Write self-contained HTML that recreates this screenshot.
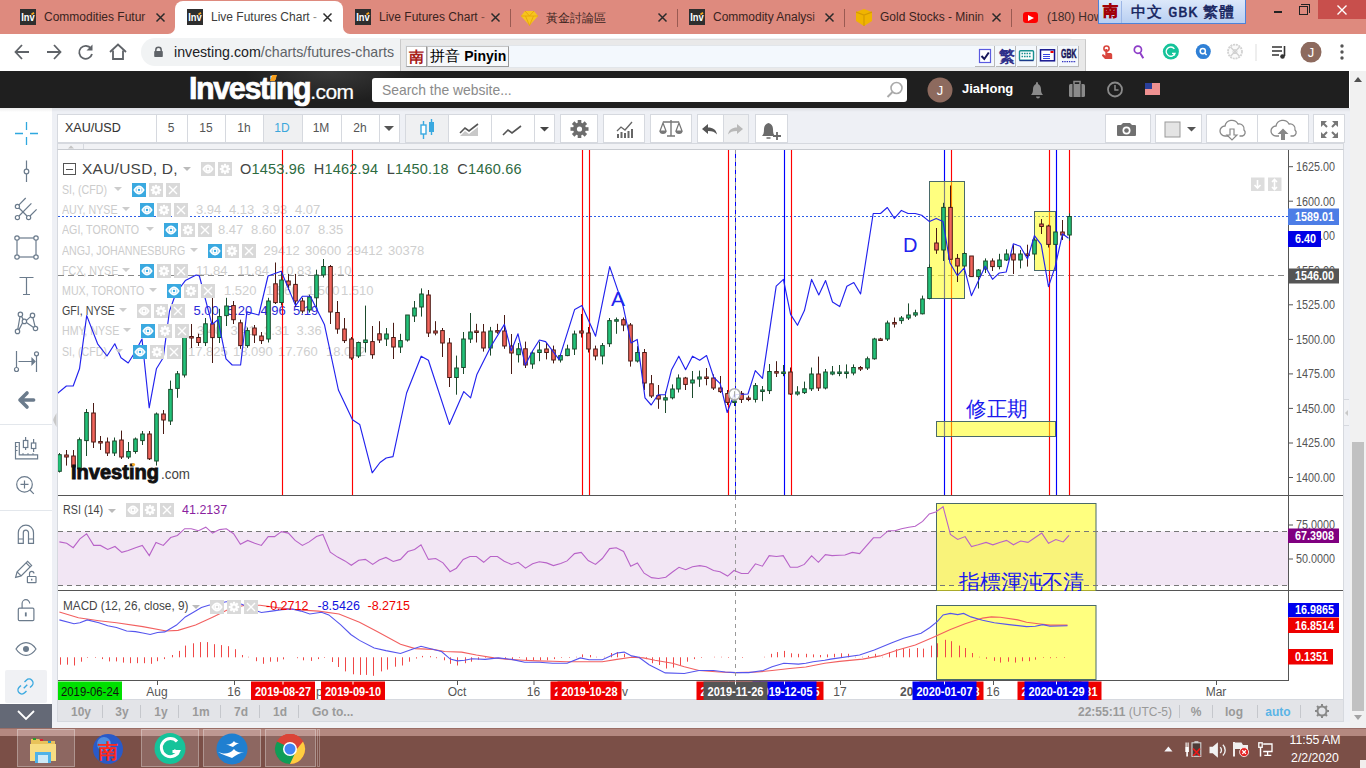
<!DOCTYPE html><html><head><meta charset="utf-8"><style>
*{margin:0;padding:0;box-sizing:border-box}
html,body{width:1366px;height:768px;overflow:hidden;background:#fff;font-family:"Liberation Sans",sans-serif;position:relative}
.a{position:absolute}
.tab{position:absolute;top:0;height:34px;font-size:12px;color:#3c2a28;white-space:nowrap}
.tabt{position:absolute;top:10px;left:36px;width:112px;overflow:hidden;}
.fade{position:absolute;top:0;right:0;width:14px;height:18px}
.x{position:absolute;top:9px;font-size:15px;color:#333}
.inv{position:absolute;top:10px;width:16px;height:16px;background:#2b2b2b;color:#fff;font-size:9px;font-weight:bold;line-height:16px;text-align:center;letter-spacing:-0.5px}
.sep{position:absolute;top:9px;width:1px;height:18px;background:#9a5a52}
.tb{position:absolute;top:114px;height:29px;background:#fff;border:1px solid #d8dbe2}
.lt{position:absolute;left:0;width:52px;text-align:center}
</style></head><body>
<div class="a" style="left:0;top:0;width:1366px;height:34px;background:#de8a7e"></div>
<div class="a" style="left:175px;top:1px;width:168px;height:40px;background:#fff;border-radius:8px 8px 0 0"></div>
<div class="a" style="left:165px;top:25px;width:188px;height:9px;background:#fff"></div><div class="a" style="left:150px;top:20px;width:25px;height:14px;background:#de8a7e;border-bottom-right-radius:7px"></div><div class="a" style="left:343px;top:20px;width:25px;height:14px;background:#de8a7e;border-bottom-left-radius:7px"></div>
<svg class="a" style="left:20px;top:9px" width="16" height="16"><rect width="16" height="16" fill="#2e2e2e"/><text x="1.2" y="12.3" font-size="10.5" font-weight="bold" fill="#fff" textLength="13.5" lengthAdjust="spacingAndGlyphs" font-family="Liberation Sans">Inv</text><path d="M11.5 5.5l2.5-1.8" stroke="#f7a51e" stroke-width="1.8"/></svg>
<div class="tab" style="left:8px;width:168px"><div class="tabt" style="color:#3a2320">Commodities Futur</div><div class="fade" style="left:134px;top:10px;background:linear-gradient(90deg,rgba(0,0,0,0),#de8a7e)"></div></div>
<svg class="a" style="left:155px;top:12px" width="11" height="11"><path d="M1.5 1.5L9.5 9.5M9.5 1.5L1.5 9.5" stroke="#2a2a2a" stroke-width="1.5"/></svg>
<svg class="a" style="left:187px;top:9px" width="16" height="16"><rect width="16" height="16" fill="#2e2e2e"/><text x="1.2" y="12.3" font-size="10.5" font-weight="bold" fill="#fff" textLength="13.5" lengthAdjust="spacingAndGlyphs" font-family="Liberation Sans">Inv</text><path d="M11.5 5.5l2.5-1.8" stroke="#f7a51e" stroke-width="1.8"/></svg>
<div class="tab" style="left:175px;width:168px"><div class="tabt" style="color:#3c3c3c">Live Futures Chart -</div><div class="fade" style="left:134px;top:10px;background:linear-gradient(90deg,rgba(0,0,0,0),#fff)"></div></div>
<svg class="a" style="left:322px;top:12px" width="11" height="11"><path d="M1.5 1.5L9.5 9.5M9.5 1.5L1.5 9.5" stroke="#2a2a2a" stroke-width="1.5"/></svg>
<svg class="a" style="left:355px;top:9px" width="16" height="16"><rect width="16" height="16" fill="#2e2e2e"/><text x="1.2" y="12.3" font-size="10.5" font-weight="bold" fill="#fff" textLength="13.5" lengthAdjust="spacingAndGlyphs" font-family="Liberation Sans">Inv</text><path d="M11.5 5.5l2.5-1.8" stroke="#f7a51e" stroke-width="1.8"/></svg>
<div class="tab" style="left:343px;width:168px"><div class="tabt" style="color:#3a2320">Live Futures Chart -</div><div class="fade" style="left:134px;top:10px;background:linear-gradient(90deg,rgba(0,0,0,0),#de8a7e)"></div></div>
<svg class="a" style="left:490px;top:12px" width="11" height="11"><path d="M1.5 1.5L9.5 9.5M9.5 1.5L1.5 9.5" stroke="#2a2a2a" stroke-width="1.5"/></svg>
<svg class="a" style="left:521px;top:10px" width="17" height="16" viewBox="0 0 17 16"><path d="M4 1h9l4 5-8.5 9.5L0 6z" fill="#f7c51e"/><path d="M0 6h17M4 1l4.5 5 4.5-5M4.5 6l4 9.5 4-9.5" stroke="#e8a80c" stroke-width="1" fill="none"/></svg>
<div class="tab" style="left:510px;width:168px"><div class="tabt" style="color:#3a2320">黃金討論區</div><div class="fade" style="left:134px;top:10px;background:linear-gradient(90deg,rgba(0,0,0,0),#de8a7e)"></div></div>
<svg class="a" style="left:657px;top:12px" width="11" height="11"><path d="M1.5 1.5L9.5 9.5M9.5 1.5L1.5 9.5" stroke="#2a2a2a" stroke-width="1.5"/></svg>
<div class="sep" style="left:677px"></div>
<svg class="a" style="left:689px;top:9px" width="16" height="16"><rect width="16" height="16" fill="#2e2e2e"/><text x="1.2" y="12.3" font-size="10.5" font-weight="bold" fill="#fff" textLength="13.5" lengthAdjust="spacingAndGlyphs" font-family="Liberation Sans">Inv</text><path d="M11.5 5.5l2.5-1.8" stroke="#f7a51e" stroke-width="1.8"/></svg>
<div class="tab" style="left:677px;width:168px"><div class="tabt" style="color:#3a2320">Commodity Analysi</div><div class="fade" style="left:134px;top:10px;background:linear-gradient(90deg,rgba(0,0,0,0),#de8a7e)"></div></div>
<svg class="a" style="left:824px;top:12px" width="11" height="11"><path d="M1.5 1.5L9.5 9.5M9.5 1.5L1.5 9.5" stroke="#2a2a2a" stroke-width="1.5"/></svg>
<div class="sep" style="left:844px"></div>
<svg class="a" style="left:856px;top:9px" width="16" height="17" viewBox="0 0 16 17"><path d="M0 3l8-3 8 3v9l-8 5-8-5z" fill="#f0b400"/><path d="M0 3l8 3 8-3M8 6v11" stroke="#d59a00" stroke-width="1.2" fill="none"/></svg>
<div class="tab" style="left:844px;width:168px"><div class="tabt" style="color:#3a2320">Gold Stocks - Minin</div><div class="fade" style="left:134px;top:10px;background:linear-gradient(90deg,rgba(0,0,0,0),#de8a7e)"></div></div>
<svg class="a" style="left:991px;top:12px" width="11" height="11"><path d="M1.5 1.5L9.5 9.5M9.5 1.5L1.5 9.5" stroke="#2a2a2a" stroke-width="1.5"/></svg>
<div class="sep" style="left:1011px"></div>
<div class="a" style="left:1023px;top:12px;width:15px;height:11px;background:#f00;border-radius:3px"></div><svg class="a" style="left:1028px;top:14.5px" width="6" height="6"><path d="M0 0L6 3 0 6z" fill="#fff"/></svg>
<div class="tab" style="left:1011px;width:120px"><div class="tabt">(180) How</div></div>
<div class="sep" style="left:510px"></div>
<div class="a" style="left:1098px;top:0;width:148px;height:24px;background:linear-gradient(#dce8fa,#b9cff2);border:1px solid #4d82d8;border-top:none"></div>
<div class="a" style="left:1103px;top:2px;font-size:15px;font-weight:bold;color:#c8000a;-webkit-text-stroke:0.6px #a00008">南</div>
<div class="a" style="left:1121px;top:1px;width:1px;height:22px;background:#9cb6e6"></div>
<div class="a" style="left:1131px;top:3px;font-size:15px;color:#15235e;letter-spacing:1px;white-space:nowrap;-webkit-text-stroke:0.5px #15235e">中文 <span style="font-family:'Liberation Mono',monospace">GBK</span> 繁體</div>
<div class="a" style="left:1274px;top:11px;width:8px;height:1.5px;background:#222"></div>
<div class="a" style="left:1299px;top:6px;width:9px;height:9px;border:1.3px solid #222"></div><div class="a" style="left:1301px;top:4px;width:9px;height:9px;border-top:1.3px solid #222;border-right:1.3px solid #222"></div>
<div class="a" style="left:1318px;top:0;width:48px;height:19px;background:#c84f4c"></div>
<svg class="a" style="left:1337px;top:5px" width="10" height="10"><path d="M0.5 0.5L9.5 9.5M9.5 0.5L0.5 9.5" stroke="#fff" stroke-width="1.4"/></svg>
<div class="a" style="left:0;top:34px;width:1366px;height:37px;background:#fff"></div>
<svg class="a" style="left:14px;top:43px" width="120" height="18" viewBox="0 0 120 18" fill="none" stroke="#5f6368" stroke-width="1.8"><path d="M15 9H2M8 2L1.5 9 8 16"/><path d="M33 9H46M40 2L46.5 9 40 16"/><path d="M77 5.5A6.5 6.5 0 1 0 78 11" /><path d="M78.5 1.5v6h-6z" fill="#5f6368" stroke="none"/><path d="M96 9L104 1.5 112 9"/><path d="M99 7.5v8.5h10V7.5"/></svg>
<div class="a" style="left:141px;top:38px;width:940px;height:28px;background:#f1f3f4;border-radius:14px"></div>
<svg class="a" style="left:153px;top:46px" width="11" height="12"><path d="M2.8 5V4a2.7 2.7 0 0 1 5.4 0V5" stroke="#5f6368" stroke-width="1.5" fill="none"/><rect x="1.2" y="5" width="8.6" height="6" rx="0.8" fill="#5f6368"/></svg>
<div class="a" style="left:174px;top:44px;font-size:14.2px;color:#202124;white-space:nowrap">investing.com<span style="color:#5f6368">/charts/futures-charts</span></div>
<div class="a" style="left:400px;top:39px;width:686px;height:36px;background:#e9e9e9;border:1px solid #c9c9c9;border-top-color:#ddd"></div>
<div class="a" style="left:405px;top:45px;width:674px;height:23px;background:#f3f8fd;border:1px solid #e2e6ea"></div>
<div class="a" style="left:406px;top:46px;width:21px;height:21px;background:#fff;border:1px solid #c5c5c5;border-right-color:#999;border-bottom-color:#999"></div>
<div class="a" style="left:409px;top:48px;font-size:15px;font-weight:bold;color:#a8201a">南</div>
<div class="a" style="left:427px;top:46px;width:82px;height:21px;background:#f6f8fa;border:1px solid #c5c5c5;border-right-color:#999;border-bottom-color:#999"></div>
<div class="a" style="left:430px;top:47px;font-size:15px;color:#000;white-space:nowrap">拼音 <b style="font-size:14px">Pinyin</b></div>
<div class="a" style="left:975px;top:46px;width:20px;height:21px;background:#f4f8fc;border-right:1px solid #b9b9b9;border-bottom:1px solid #b9b9b9"></div>
<div class="a" style="left:996px;top:46px;width:20px;height:21px;background:#f4f8fc;border-right:1px solid #b9b9b9;border-bottom:1px solid #b9b9b9"></div>
<div class="a" style="left:1017px;top:46px;width:20px;height:21px;background:#f4f8fc;border-right:1px solid #b9b9b9;border-bottom:1px solid #b9b9b9"></div>
<div class="a" style="left:1038px;top:46px;width:20px;height:21px;background:#f4f8fc;border-right:1px solid #b9b9b9;border-bottom:1px solid #b9b9b9"></div>
<div class="a" style="left:1059px;top:46px;width:20px;height:21px;background:#f4f8fc;border-right:1px solid #b9b9b9;border-bottom:1px solid #b9b9b9"></div>
<svg class="a" style="left:975px;top:46px" width="105" height="20" viewBox="0 0 105 20"><rect x="4.5" y="3.5" width="11" height="13" fill="#fff" stroke="#5a5ae0" stroke-width="1.2"/><path d="M6.5 10l2.8 3 4.5-6.5" stroke="#15155a" stroke-width="2" fill="none"/><text x="23.5" y="15.5" font-size="15.5" font-weight="bold" fill="#30308a">繁</text><rect x="44.5" y="4.7" width="14" height="9.5" rx="1" fill="#fff" stroke="#1a9090" stroke-width="1.4"/><path d="M46.5 7.5h10M46.5 10.5h10" stroke="#1a9090" stroke-width="1.6" stroke-dasharray="1.6 0.9"/><path d="M44.5 14.6h14" stroke="#1a3a8a" stroke-width="1.2"/><rect x="65.5" y="3.8" width="14" height="11" fill="#fff" stroke="#151590" stroke-width="1.5"/><path d="M68 8.5h7M68 10.5h7M68 12.5h7" stroke="#2030e0" stroke-width="0.9"/><rect x="75.5" y="5" width="3" height="2" fill="#e00"/><text x="86" y="11.8" font-size="12" font-weight="bold" fill="#15155a" stroke="#15155a" stroke-width="0.5" textLength="15.5" lengthAdjust="spacingAndGlyphs">GBK</text><path d="M87 15.7h14" stroke="#3030c0" stroke-width="1.3" stroke-dasharray="1.4 0.9"/></svg>
<svg class="a" style="left:1096px;top:42px" width="270" height="22" viewBox="0 0 270 22"><circle cx="10.5" cy="6.6" r="2.6" fill="none" stroke="#d9463e" stroke-width="1.6"/><path d="M9.3 7v6.8l-1.6-1.2c-1-.7-2.2.3-1.5 1.3L9 17h7.2v-4.3c0-1.3-1-1.8-2.2-1.8h-2.6V7z" fill="#d9463e"/><circle cx="41.9" cy="7.7" r="3.6" stroke="#8e3ec8" stroke-width="1.7" fill="none"/><path d="M44 10.8L47.3 16.2" stroke="#8e3ec8" stroke-width="2"/><circle cx="74.9" cy="9.6" r="8" fill="#15c39a"/><path d="M78.4 6.8a4.6 4.6 0 1 0 .6 4.6h-3" stroke="#fff" stroke-width="1.3" fill="none"/><path d="M77 11.4l2 2" stroke="#fff" stroke-width="1.3"/><circle cx="107.3" cy="9.6" r="7.5" fill="#2f80d6"/><circle cx="106.8" cy="9.1" r="2.6" stroke="#fff" stroke-width="1.5" fill="none"/><path d="M108.6 11l2 2" stroke="#fff" stroke-width="1.5"/><circle cx="139" cy="9.6" r="7" stroke="#d2d2d2" stroke-width="1.8" stroke-dasharray="2 0.8" fill="#fafafa"/><circle cx="139" cy="9.6" r="2" fill="none" stroke="#d0d0d0" stroke-width="1"/><path d="M134.5 5l9 9.2M143.5 5l-9 9.2" stroke="#d0d0d0" stroke-width="1.3"/><path d="M160 2v17" stroke="#ddd" stroke-width="1"/><path d="M176 5h10M176 9h10M176 13h7" stroke="#333" stroke-width="1.6"/><path d="M188.5 4v10" stroke="#333" stroke-width="1.6"/><circle cx="186.5" cy="14.5" r="2.3" fill="#333"/><circle cx="215" cy="10" r="10.5" fill="#8d6a5e"/><text x="215" y="15" font-size="13" fill="#fff" text-anchor="middle" font-family="Liberation Sans">J</text><circle cx="246" cy="4" r="1.7" fill="#555"/><circle cx="246" cy="10" r="1.7" fill="#555"/><circle cx="246" cy="16" r="1.7" fill="#555"/></svg>
<div class="a" style="left:0;top:71px;width:1349px;height:38px;background:#1f1f1f"></div>
<div class="a" style="left:230px;top:71px;width:200px;height:37px;background:radial-gradient(ellipse at 50% 0%,rgba(90,90,90,.45),rgba(0,0,0,0) 60%)"></div>
<div class="a" style="left:189px;top:71px;font-size:30.5px;font-weight:bold;color:#fff;letter-spacing:-1.4px;white-space:nowrap;-webkit-text-stroke:0.7px #fff">Investing<span style="font-weight:normal;font-size:21px;letter-spacing:-0.6px;-webkit-text-stroke:0.2px #fff">.com</span></div>
<div class="a" style="left:271px;top:75px;width:5px;height:6px;background:#f7a01f;transform:skewX(-20deg)"></div>
<div class="a" style="left:372px;top:78px;width:535px;height:24px;background:#fff;border-radius:3px"></div>
<div class="a" style="left:382px;top:82px;font-size:13.9px;color:#8a8a8a;white-space:nowrap">Search the website...</div>
<svg class="a" style="left:886px;top:81px" width="18" height="18"><circle cx="10.5" cy="7" r="5.5" stroke="#aaa" stroke-width="1.6" fill="none"/><path d="M6.5 11L1.5 16" stroke="#aaa" stroke-width="2"/></svg>
<svg class="a" style="left:926px;top:76px" width="240" height="28" viewBox="0 0 240 28"><circle cx="14" cy="14" r="12.5" fill="#8d6a5e"/><text x="14" y="19" font-size="13" fill="#fff" text-anchor="middle" font-family="Liberation Sans">J</text><path d="M107 19h10c-1.5-1.5-2-3-2-6 0-2.5-1.5-4.5-3-5v-1c0-1-1-1-1-1s-1 0-1 1v1c-1.5.5-3 2.5-3 5 0 3-.5 4.5-2 6z M110 20.5a2 2 0 0 0 4 0z" fill="#8a8a8a"/><rect x="143" y="8" width="16" height="13" rx="1.5" fill="#8a8a8a"/><path d="M148 8V5.5h6V8" stroke="#8a8a8a" stroke-width="1.5" fill="none"/><path d="M147 8v13M155 8v13" stroke="#1f1f1f" stroke-width="1"/><circle cx="189" cy="13.5" r="7" stroke="#8a8a8a" stroke-width="1.8" fill="none"/><path d="M189 9v5h3.5" stroke="#8a8a8a" stroke-width="1.5" fill="none"/></svg>
<div class="a" style="left:962px;top:81px;font-size:13px;font-weight:bold;color:#fff">JiaHong</div>
<svg class="a" style="left:1145px;top:83px" width="15" height="12" viewBox="0 0 15 12"><rect width="15" height="12" fill="#fff"/><path d="M0 1h15M0 3h15M0 5h15M0 7h15M0 9h15M0 11h15" stroke="#d22" stroke-width="1"/><rect width="7" height="6" fill="#2a3f9a"/></svg>
<div class="a" style="left:1350px;top:71px;width:16px;height:657px;background:#f1f1f1"></div>
<svg class="a" style="left:1353px;top:76px" width="10" height="8"><path d="M1 6L5 1 9 6z" fill="#505050"/></svg>
<svg class="a" style="left:1353px;top:714px" width="10" height="8"><path d="M1 1L5 6 9 1z" fill="#a3a3a3"/></svg>
<div class="a" style="left:1352px;top:442px;width:12px;height:269px;background:#c1c1c1"></div>
<div class="a" style="left:0;top:108px;width:1350px;height:620px;background:#eef0f5"></div>
<div class="a" style="left:0;top:108px;width:52px;height:620px;background:#fff"></div><div class="a" style="left:0;top:108px;width:1350px;height:4px;background:linear-gradient(rgba(0,0,0,0.08),rgba(0,0,0,0))"></div>
<svg class="a" style="left:52px;top:410px" width="6" height="20"><path d="M4.5 3Q1 9 1.2 10 1 11 4.5 17z" fill="#c8c8c8"/></svg>
<div class="a" style="left:1344px;top:399px;width:5px;height:27px;border-top:1px solid #d6d9df;border-bottom:1px solid #d6d9df;background:#f1f2f5"></div><svg class="a" style="left:1344px;top:409px" width="5" height="8"><path d="M4 1L1 4 4 7z" fill="#c8c8c8"/></svg>
<div class="a" style="left:57px;top:114px;width:343px;height:29px;background:#fff;border:1px solid #d6d9df"></div>
<div class="a" style="left:156px;top:114px;width:1px;height:29px;background:#d6d9df"></div>
<div class="a" style="left:187px;top:114px;width:1px;height:29px;background:#d6d9df"></div>
<div class="a" style="left:225px;top:114px;width:1px;height:29px;background:#d6d9df"></div>
<div class="a" style="left:263px;top:114px;width:1px;height:29px;background:#d6d9df"></div>
<div class="a" style="left:264px;top:115px;width:38px;height:27px;background:#eff0f2"></div>
<div class="a" style="left:302px;top:114px;width:1px;height:29px;background:#d6d9df"></div>
<div class="a" style="left:341px;top:114px;width:1px;height:29px;background:#d6d9df"></div>
<div class="a" style="left:379px;top:114px;width:1px;height:29px;background:#d6d9df"></div>
<div class="a" style="left:65px;top:120px;font-size:13.5px;color:#333;transform:scaleX(0.93);transform-origin:0 0;-webkit-text-stroke:0.1px #444">XAU/USD</div>
<div class="a" style="left:156px;width:30px;top:121px;font-size:12px;color:#555;text-align:center">5</div>
<div class="a" style="left:191px;width:30px;top:121px;font-size:12px;color:#555;text-align:center">15</div>
<div class="a" style="left:229px;width:30px;top:121px;font-size:12px;color:#555;text-align:center">1h</div>
<div class="a" style="left:267px;width:30px;top:121px;font-size:12px;color:#3ba7dc;text-align:center">1D</div>
<div class="a" style="left:306px;width:30px;top:121px;font-size:12px;color:#555;text-align:center">1M</div>
<div class="a" style="left:345px;width:30px;top:121px;font-size:12px;color:#555;text-align:center">2h</div>
<svg class="a" style="left:384px;top:126px" width="10" height="6"><path d="M0 0h10L5 5z" fill="#555"/></svg>
<div class="a" style="left:405px;top:114px;width:150px;height:29px;background:#fff;border:1px solid #d6d9df"></div>
<div class="a" style="left:406px;top:115px;width:42px;height:27px;background:#eff0f2"></div>
<div class="a" style="left:448px;top:114px;width:1px;height:29px;background:#d6d9df"></div>
<div class="a" style="left:491px;top:114px;width:1px;height:29px;background:#d6d9df"></div>
<div class="a" style="left:534px;top:114px;width:1px;height:29px;background:#d6d9df"></div>
<div class="a" style="left:560px;top:114px;width:38px;height:29px;background:#fff;border:1px solid #d6d9df"></div>
<div class="a" style="left:603px;top:114px;width:42px;height:29px;background:#fff;border:1px solid #d6d9df"></div>
<div class="a" style="left:650px;top:114px;width:42px;height:29px;background:#fff;border:1px solid #d6d9df"></div>
<div class="a" style="left:697px;top:114px;width:52px;height:29px;background:#fff;border:1px solid #d6d9df"></div>
<div class="a" style="left:723px;top:115px;width:25px;height:27px;background:#eff0f2;border-left:1px solid #d6d9df"></div>
<div class="a" style="left:755px;top:114px;width:33px;height:29px;background:#fff;border:1px solid #d6d9df"></div>
<svg class="a" style="left:405px;top:114px" width="390" height="30" viewBox="0 0 390 30"><path d="M18.5 7v18M26.5 5v16" stroke="#3aa9e0" stroke-width="1.4"/><rect x="16" y="11" width="5" height="9" fill="#fff" stroke="#3aa9e0" stroke-width="1.4"/><rect x="24" y="8" width="5" height="10" fill="#3aa9e0"/><g transform="translate(-6,0)"><path d="M61 22l5-5 4 3 9-7v9z" fill="#c8c8c8"/><path d="M61 19l5-5 4 3 9-7" stroke="#555" stroke-width="1.6" fill="none"/></g><path d="M98 21l5-5 4 3 9-7" stroke="#555" stroke-width="1.6" fill="none"/><path d="M135 13h9l-4.5 4.5z" fill="#444"/><g transform="translate(174.5,15)"><circle r="6.5" fill="#6d6d6d"/><g fill="#6d6d6d"><rect x="-1.8" y="-9" width="3.6" height="4" transform="rotate(0)"/><rect x="-1.8" y="-9" width="3.6" height="4" transform="rotate(45)"/><rect x="-1.8" y="-9" width="3.6" height="4" transform="rotate(90)"/><rect x="-1.8" y="-9" width="3.6" height="4" transform="rotate(135)"/><rect x="-1.8" y="-9" width="3.6" height="4" transform="rotate(180)"/><rect x="-1.8" y="-9" width="3.6" height="4" transform="rotate(225)"/><rect x="-1.8" y="-9" width="3.6" height="4" transform="rotate(270)"/><rect x="-1.8" y="-9" width="3.6" height="4" transform="rotate(315)"/></g><circle r="2.6" fill="#fff"/></g><g transform="translate(-2,0)"><path d="M215 24v-4M218.5 24v-6M222 24v-5M225.5 24v-7M229 24v-9" stroke="#666" stroke-width="2"/><path d="M214 17l4-4 4 3 7-8" stroke="#666" stroke-width="1.3" fill="none"/></g><g transform="translate(-8,0)"><path d="M266 8h16M274 6v16M270 22h8" stroke="#777" stroke-width="1.4"/><path d="M266 9l-3 8h6zM282 9l-3 8h6z" stroke="#777" stroke-width="1.2" fill="none"/><path d="M262.5 17a3.5 3 0 0 0 7 0M278.5 17a3.5 3 0 0 0 7 0" fill="#777"/></g><path d="M297 15l6-5v3.5c5 0 8 2 9 7-2-2.5-4.5-3.5-9-3.5V20z" fill="#555"/><path d="M338 15l-6-5v3.5c-5 0-8 2-9 7 2-2.5 4.5-3.5 9-3.5V20z" fill="#b8b8b8"/><g transform="translate(-2,0)"><path d="M359 22h13c-1.5-1.5-2-3-2-7 0-3.5-2-5.5-4.5-6v-1.5h-0v0h0v1.5c-2.5.5-4.5 2.5-4.5 6 0 4-.5 5.5-2 7z" fill="#6a6a6a"/><path d="M363.5 24h4" stroke="#6a6a6a" stroke-width="1.5"/><path d="M374 18v8M370 22h8" stroke="#6a6a6a" stroke-width="1.8"/></g></svg>
<div class="a" style="left:1105px;top:114px;width:46px;height:29px;background:#fff;border:1px solid #d6d9df"></div>
<div class="a" style="left:1155px;top:114px;width:47px;height:29px;background:#fff;border:1px solid #d6d9df"></div>
<div class="a" style="left:1206px;top:114px;width:103px;height:29px;background:#fff;border:1px solid #d6d9df"></div>
<div class="a" style="left:1313px;top:114px;width:32px;height:29px;background:#fff;border:1px solid #d6d9df"></div>
<div class="a" style="left:1257px;top:115px;width:1px;height:27px;background:#d6d9df"></div>
<svg class="a" style="left:1105px;top:114px" width="240" height="30" viewBox="0 0 240 30"><path d="M13 11h3l2-2h7l2 2h3a1 1 0 0 1 1 1v9a1 1 0 0 1-1 1H13a1 1 0 0 1-1-1v-9a1 1 0 0 1 1-1z" fill="#707070"/><circle cx="21.5" cy="16.5" r="4" fill="#fff"/><circle cx="21.5" cy="16.5" r="2.3" fill="#707070"/><rect x="60" y="8" width="15" height="15" fill="#e4e4e4" stroke="#999" stroke-width="1"/><path d="M82 13h9l-4.5 4.5z" fill="#555"/><g transform="translate(11,0)"><path d="M112 22h-3a5 5 0 0 1 0-10 7 7 0 0 1 13-2 5 5 0 0 1 6 6 3.5 3.5 0 0 1-1.5 6h-3" stroke="#888" stroke-width="1.3" fill="none"/><path d="M114 15v6h-3l5 5 5-5h-3v-6z" stroke="#888" stroke-width="1.2" fill="#fff"/></g><g transform="translate(11,0)"><path d="M163 22h-3a5 5 0 0 1 0-10 7 7 0 0 1 13-2 5 5 0 0 1 6 6 3.5 3.5 0 0 1-1.5 6h-3" stroke="#888" stroke-width="1.3" fill="none"/><path d="M165 26v-6h-3.5l5.5-5.5 5.5 5.5h-3.5v6z" fill="#888"/></g><path d="M216 7h6l-6 6zM233 7h-6l6 6zM216 24h6l-6-6zM233 24h-6l6-6z" fill="#777"/><path d="M217 8l5 5M232 8l-5 5M217 23l5-5M232 23l-5-5" stroke="#777" stroke-width="2"/></svg>
<svg class="a" style="left:0;top:108px" width="52" height="620" viewBox="0 108 52 620" fill="none" stroke="#6b7b8c" stroke-width="1.2"><path d="M26.5 122v8M26.5 137v8M15 133.5h8M30 133.5h8" stroke="#2fa8df" stroke-width="1.3"/><path d="M26.5 160.5v8.5M26.5 174v8"/><circle cx="26.5" cy="171.5" r="2.3"/><path d="M19 204.8L25.7 198M30 216L36.6 209.3M19 216L31.4 203.3M19 208L27 216"/><circle cx="17.4" cy="206.4" r="2.1"/><circle cx="17.4" cy="217.6" r="2.1"/><circle cx="28.6" cy="217.6" r="2.1"/><rect x="17" y="238" width="19" height="19"/><circle cx="17" cy="238" r="2.2" fill="#fff"/><circle cx="36" cy="238" r="2.2" fill="#fff"/><circle cx="17" cy="257" r="2.2" fill="#fff"/><circle cx="36" cy="257" r="2.2" fill="#fff"/><path d="M19.5 277.5h14M26.5 277.5v17M23 294.5h7"/><path d="M20 316.5L17.8 329.2M21.5 316.4L23.2 319.4M22.6 322.8L19 329.6M26.5 320.4L30.6 316.6M26.4 322.4L33.6 327.4M32.9 317.6L35 326.3"/><circle cx="20.4" cy="314.4" r="2.2"/><circle cx="32.5" cy="315.4" r="2.2"/><circle cx="24.4" cy="321.4" r="2.2"/><circle cx="17.5" cy="331.4" r="2.2"/><circle cx="35.5" cy="328.5" r="2.2"/><path d="M16.5 351v16.5M36.5 356v16M18.5 361.5h15"/><path d="M32 358.5l3 3-3 3z" fill="#6b7b8c"/><circle cx="16.5" cy="369.5" r="2"/><circle cx="36.5" cy="353.8" r="2"/><path d="M33.6 400H20M27 393l-7 7 7 7" stroke-width="3.6" stroke-linecap="round" stroke-linejoin="round"/><path d="M0 424.5h52" stroke="#e3e7ec" stroke-width="1"/><path d="M15.5 442.5h3.8v12.3h18.3v4h-22.1z"/><path d="M15.5 446.5h2M15.5 450.5h2M23 454.8v-1.5M28 454.8v-1.5M33 454.8v-1.5"/><path d="M25.6 437v3.5M25.6 447.5v2.5M33.6 439v4M33.6 448.5v3.5"/><rect x="23.4" y="440.5" width="4.4" height="7"/><rect x="31.4" y="443" width="4.4" height="5.5"/><circle cx="24.5" cy="484.4" r="7.8"/><path d="M30 490l3.8 3.8M24.5 480.5v8M20.5 484.4h8" /><path d="M0 510.5h52" stroke="#e3e7ec" stroke-width="1"/><path d="M18.3 543.4V532.8a7.6 7.6 0 0 1 15.2 0V543.4H28.5V532.8a2.6 2.6 0 0 0-5.2 0V543.4z M18.3 539h5M28.5 539h5"/><path d="M15.6 577.4l1.5-5.5 10.5-10.5 4 4-10.5 10.5zM17.1 571.9l4 4M26.1 562.9l4 4"/><rect x="27.4" y="576.5" width="8.6" height="6.2" rx="0.5"/><path d="M29.5 576.5v-3a2.2 2.2 0 0 1 4.4 0"/><path d="M31.7 578.7v1.8" stroke-width="1.4"/><rect x="18.3" y="608.2" width="15.6" height="12.5" rx="1.2"/><path d="M22.1 608.2V603.5a3.8 3.8 0 0 1 7.6 0"/><path d="M25.8 612.4v4" stroke-width="1.8"/><path d="M16 649c5.5-8.5 14.5-8.5 20 0-5.5 8.5-14.5 8.5-20 0z"/><circle cx="26" cy="649" r="3" fill="#6b7b8c" stroke="none"/></svg>
<div class="a" style="left:5px;top:670px;width:41.5px;height:32.5px;background:#f0f1f4;border-radius:2px"></div>
<svg class="a" style="left:0;top:665px" width="52" height="40"><g transform="rotate(-45 25.5 21.5) translate(0,0)"><path d="M23 17.6h-2.6a3.9 3.9 0 0 0 0 7.8h2.6M28 25.4h2.6a3.9 3.9 0 0 0 0-7.8h-2.6" stroke="#3aa9e0" stroke-width="1.4" fill="none"/><path d="M23 21.5h5" stroke="#3aa9e0" stroke-width="1.4"/></g></svg>
<div class="a" style="left:0;top:704px;width:52px;height:24px;background:#646976"></div>
<svg class="a" style="left:16px;top:709px" width="20" height="12"><path d="M2 2l8 8 8-8" stroke="#fff" stroke-width="1.8" fill="none"/></svg>
<div class="a" style="left:57px;top:143px;width:1287px;height:7px;background:#f1f2f5;border:1px solid #d6d9df;border-bottom:none"></div>
<div class="a" style="left:83px;top:143px;width:1px;height:7px;background:#d6d9df"></div>
<svg class="a" style="left:67.5px;top:145px" width="6" height="4"><path d="M0 3.5L3 0.5 6 3.5z" fill="#c4c4c4"/></svg>
<div class="a" style="left:57px;top:149px;width:1287px;height:551px;background:#fff;border:1px solid #d6d9df;border-top-color:#c8cbd0"></div>
<div class="a" style="left:57px;top:700px;width:1287px;height:22px;background:#e3e4e8;border:1px solid #d6d9df;border-top:none"></div>
<div class="a" style="left:52px;top:722px;width:1298px;height:6px;background:#f1f2f5"></div>
<div class="a" style="left:62px;top:182px;font-size:13px;color:#ccc;white-space:nowrap;transform:scaleX(0.82);transform-origin:0 0">SI, (CFD)</div>
<div class="a" style="left:62px;top:202px;font-size:13px;color:#ccc;white-space:nowrap;transform:scaleX(0.82);transform-origin:0 0">AUY, NYSE</div>
<div class="a" style="left:196px;top:202px;font-size:13px;color:#cfcfcf;white-space:nowrap">3.94</div>
<div class="a" style="left:229px;top:202px;font-size:13px;color:#cfcfcf;white-space:nowrap">4.13</div>
<div class="a" style="left:262px;top:202px;font-size:13px;color:#cfcfcf;white-space:nowrap">3.93</div>
<div class="a" style="left:295px;top:202px;font-size:13px;color:#cfcfcf;white-space:nowrap">4.07</div>
<div class="a" style="left:62px;top:222px;font-size:13px;color:#ccc;white-space:nowrap;transform:scaleX(0.82);transform-origin:0 0">AGI, TORONTO</div>
<div class="a" style="left:218px;top:222px;font-size:13px;color:#cfcfcf;white-space:nowrap">8.47</div>
<div class="a" style="left:251px;top:222px;font-size:13px;color:#cfcfcf;white-space:nowrap">8.60</div>
<div class="a" style="left:285px;top:222px;font-size:13px;color:#cfcfcf;white-space:nowrap">8.07</div>
<div class="a" style="left:318px;top:222px;font-size:13px;color:#cfcfcf;white-space:nowrap">8.35</div>
<div class="a" style="left:62px;top:243px;font-size:13px;color:#ccc;white-space:nowrap;transform:scaleX(0.82);transform-origin:0 0">ANGJ, JOHANNESBURG</div>
<div class="a" style="left:263.5px;top:243px;font-size:13px;color:#cfcfcf;white-space:nowrap">29412</div>
<div class="a" style="left:305px;top:243px;font-size:13px;color:#cfcfcf;white-space:nowrap">30600</div>
<div class="a" style="left:346.5px;top:243px;font-size:13px;color:#cfcfcf;white-space:nowrap">29412</div>
<div class="a" style="left:388px;top:243px;font-size:13px;color:#cfcfcf;white-space:nowrap">30378</div>
<div class="a" style="left:62px;top:263px;font-size:13px;color:#ccc;white-space:nowrap;transform:scaleX(0.82);transform-origin:0 0">FCX, NYSE</div>
<div class="a" style="left:196px;top:263px;font-size:13px;color:#cfcfcf;white-space:nowrap">11.84</div>
<div class="a" style="left:237.5px;top:263px;font-size:13px;color:#cfcfcf;white-space:nowrap">11.84</div>
<div class="a" style="left:279px;top:263px;font-size:13px;color:#cfcfcf;white-space:nowrap">10.83</div>
<div class="a" style="left:320px;top:263px;font-size:13px;color:#cfcfcf;white-space:nowrap">11.10</div>
<div class="a" style="left:62px;top:283px;font-size:13px;color:#ccc;white-space:nowrap;transform:scaleX(0.82);transform-origin:0 0">MUX, TORONTO</div>
<div class="a" style="left:224px;top:283px;font-size:13px;color:#cfcfcf;white-space:nowrap">1.520</div>
<div class="a" style="left:266px;top:283px;font-size:13px;color:#cfcfcf;white-space:nowrap">1.560</div>
<div class="a" style="left:307px;top:283px;font-size:13px;color:#cfcfcf;white-space:nowrap">1.500</div>
<div class="a" style="left:341px;top:283px;font-size:13px;color:#cfcfcf;white-space:nowrap">1.510</div>
<div class="a" style="left:62px;top:303px;font-size:13px;color:#444;white-space:nowrap;transform:scaleX(0.82);transform-origin:0 0">GFI, NYSE</div>
<div class="a" style="left:193.5px;top:303px;font-size:13px;color:#2b2bd9;white-space:nowrap">5.00</div>
<div class="a" style="left:227px;top:303px;font-size:13px;color:#2b2bd9;white-space:nowrap">5.20</div>
<div class="a" style="left:260.5px;top:303px;font-size:13px;color:#2b2bd9;white-space:nowrap">4.96</div>
<div class="a" style="left:293px;top:303px;font-size:13px;color:#2b2bd9;white-space:nowrap">5.19</div>
<div class="a" style="left:62px;top:323px;font-size:13px;color:#ccc;white-space:nowrap;transform:scaleX(0.82);transform-origin:0 0">HMY, NYSE</div>
<div class="a" style="left:197px;top:323px;font-size:13px;color:#cfcfcf;white-space:nowrap">3.40</div>
<div class="a" style="left:230.5px;top:323px;font-size:13px;color:#cfcfcf;white-space:nowrap">3.41</div>
<div class="a" style="left:264px;top:323px;font-size:13px;color:#cfcfcf;white-space:nowrap">3.31</div>
<div class="a" style="left:296.5px;top:323px;font-size:13px;color:#cfcfcf;white-space:nowrap">3.36</div>
<div class="a" style="left:62px;top:344px;font-size:13px;color:#ccc;white-space:nowrap;transform:scaleX(0.82);transform-origin:0 0">SI, (CFD)</div>
<div class="a" style="left:188px;top:344px;font-size:13px;color:#cfcfcf;white-space:nowrap">17.825</div>
<div class="a" style="left:233px;top:344px;font-size:13px;color:#cfcfcf;white-space:nowrap">18.090</div>
<div class="a" style="left:278px;top:344px;font-size:13px;color:#cfcfcf;white-space:nowrap">17.760</div>
<div class="a" style="left:326px;top:344px;font-size:13px;color:#cfcfcf;white-space:nowrap">18.012</div>
<svg class="a" style="left:0;top:0" width="1366" height="768" viewBox="0 0 1366 768" font-family="Liberation Sans"><defs><clipPath id="cm"><rect x="58" y="150" width="1230" height="345"/></clipPath><clipPath id="cr"><rect x="58" y="496" width="1230" height="95"/></clipPath><clipPath id="cc"><rect x="58" y="592" width="1230" height="89"/></clipPath></defs><path d="M58 495.5H1343M58 590.5H1343M58 680.5H1288M1288.5 150V681" stroke="#555" stroke-width="1" fill="none"/><path d="M1288 166.7h5" stroke="#555" stroke-width="1"/><text x="1296" y="171.0" font-size="12" fill="#555" textLength="39" lengthAdjust="spacingAndGlyphs">1625.00</text><path d="M1288 201.2h5" stroke="#555" stroke-width="1"/><text x="1296" y="205.5" font-size="12" fill="#555" textLength="39" lengthAdjust="spacingAndGlyphs">1600.00</text><path d="M1288 235.8h5" stroke="#555" stroke-width="1"/><path d="M1288 304.8h5" stroke="#555" stroke-width="1"/><text x="1296" y="309.1" font-size="12" fill="#555" textLength="39" lengthAdjust="spacingAndGlyphs">1525.00</text><path d="M1288 339.4h5" stroke="#555" stroke-width="1"/><text x="1296" y="343.7" font-size="12" fill="#555" textLength="39" lengthAdjust="spacingAndGlyphs">1500.00</text><path d="M1288 373.9h5" stroke="#555" stroke-width="1"/><text x="1296" y="378.2" font-size="12" fill="#555" textLength="39" lengthAdjust="spacingAndGlyphs">1475.00</text><path d="M1288 408.4h5" stroke="#555" stroke-width="1"/><text x="1296" y="412.7" font-size="12" fill="#555" textLength="39" lengthAdjust="spacingAndGlyphs">1450.00</text><path d="M1288 443.0h5" stroke="#555" stroke-width="1"/><text x="1296" y="447.3" font-size="12" fill="#555" textLength="39" lengthAdjust="spacingAndGlyphs">1425.00</text><path d="M1288 477.5h5" stroke="#555" stroke-width="1"/><text x="1296" y="481.8" font-size="12" fill="#555" textLength="39" lengthAdjust="spacingAndGlyphs">1400.00</text><text x="1296" y="274.6" font-size="12" fill="#555" textLength="39" lengthAdjust="spacingAndGlyphs">1550.00</text><text x="1296" y="240.1" font-size="12" fill="#555" textLength="39" lengthAdjust="spacingAndGlyphs">1575.00</text><g clip-path="url(#cm)"><path d="M58 216.5H1288" stroke="#2f5fe8" stroke-width="1" stroke-dasharray="2 2"/><path d="M58 275.5H1288" stroke="#888" stroke-width="1" stroke-dasharray="6 4"/><path d="M282.5 150V495" stroke="#f00" stroke-width="1.15"/><path d="M352.5 150V495" stroke="#f00" stroke-width="1.15"/><path d="M582.5 150V495" stroke="#f00" stroke-width="1.15"/><path d="M589.5 150V495" stroke="#f00" stroke-width="1.15"/><path d="M728.5 150V495" stroke="#f00" stroke-width="1.15"/><path d="M784.5 150V495" stroke="#00f" stroke-width="1.15"/><path d="M791.5 150V495" stroke="#f00" stroke-width="1.15"/><path d="M944.5 150V495" stroke="#00f" stroke-width="1.15"/><path d="M951.5 150V495" stroke="#f00" stroke-width="1.15"/><path d="M1049.5 150V495" stroke="#f00" stroke-width="1.15"/><path d="M1056.5 150V495" stroke="#00f" stroke-width="1.15"/><path d="M1069.5 150V495" stroke="#f00" stroke-width="1.15"/><path d="M735.5 150V495" stroke="#999" stroke-width="1" stroke-dasharray="4 4"/><path d="M735.5 154V495" stroke="#00f" stroke-width="1" stroke-dasharray="4 4"/><rect x="929.5" y="181.5" width="35.0" height="117.0" fill="#ffff00" fill-opacity="0.5" stroke="#4a6a6a" stroke-width="1"/><rect x="1034.5" y="211.5" width="21.0" height="59.0" fill="#ffff00" fill-opacity="0.5" stroke="#4a6a6a" stroke-width="1"/><rect x="936.5" y="421.5" width="119.0" height="15.0" fill="#ffff00" fill-opacity="0.5" stroke="#4a6a6a" stroke-width="1"/><path d="M59.5 453.0V472.5" stroke="#1b4a2c" stroke-width="1"/><rect x="57.7" y="454.7" width="3.6" height="16.6" fill="#22c27a" stroke="#1b4a2c" stroke-width="1"/><path d="M66.5 450.0V465.6" stroke="#4a1a14" stroke-width="1"/><rect x="64.7" y="455.0" width="3.6" height="2.0" fill="#f2655c" stroke="#4a1a14" stroke-width="1"/><path d="M73.5 450.0V469.0" stroke="#4a1a14" stroke-width="1"/><rect x="71.7" y="456.0" width="3.6" height="11.0" fill="#f2655c" stroke="#4a1a14" stroke-width="1"/><path d="M79.5 437.5V470.3" stroke="#1b4a2c" stroke-width="1"/><rect x="77.7" y="439.7" width="3.6" height="29.1" fill="#22c27a" stroke="#1b4a2c" stroke-width="1"/><path d="M86.5 409.0V456.0" stroke="#1b4a2c" stroke-width="1"/><rect x="84.7" y="412.5" width="3.6" height="28.1" fill="#22c27a" stroke="#1b4a2c" stroke-width="1"/><path d="M93.5 403.0V448.0" stroke="#4a1a14" stroke-width="1"/><rect x="91.7" y="413.0" width="3.6" height="29.0" fill="#f2655c" stroke="#4a1a14" stroke-width="1"/><path d="M100.5 436.0V450.0" stroke="#4a1a14" stroke-width="1"/><rect x="98.7" y="441.5" width="3.6" height="1.5" fill="#f2655c" stroke="#4a1a14" stroke-width="1"/><path d="M107.5 437.5V456.0" stroke="#4a1a14" stroke-width="1"/><rect x="105.7" y="442.0" width="3.6" height="11.0" fill="#f2655c" stroke="#4a1a14" stroke-width="1"/><path d="M114.5 437.5V456.0" stroke="#1b4a2c" stroke-width="1"/><rect x="112.7" y="441.0" width="3.6" height="12.0" fill="#22c27a" stroke="#1b4a2c" stroke-width="1"/><path d="M121.5 430.6V459.0" stroke="#4a1a14" stroke-width="1"/><rect x="119.7" y="440.0" width="3.6" height="17.0" fill="#f2655c" stroke="#4a1a14" stroke-width="1"/><path d="M128.5 442.0V459.0" stroke="#1b4a2c" stroke-width="1"/><rect x="126.7" y="451.5" width="3.6" height="5.5" fill="#22c27a" stroke="#1b4a2c" stroke-width="1"/><path d="M135.5 437.5V453.7" stroke="#1b4a2c" stroke-width="1"/><rect x="133.7" y="439.0" width="3.6" height="12.5" fill="#22c27a" stroke="#1b4a2c" stroke-width="1"/><path d="M142.5 431.0V445.0" stroke="#1b4a2c" stroke-width="1"/><rect x="140.7" y="434.0" width="3.6" height="6.6" fill="#22c27a" stroke="#1b4a2c" stroke-width="1"/><path d="M149.5 431.0V460.0" stroke="#4a1a14" stroke-width="1"/><rect x="147.7" y="434.0" width="3.6" height="24.8" fill="#f2655c" stroke="#4a1a14" stroke-width="1"/><path d="M156.5 412.5V465.6" stroke="#1b4a2c" stroke-width="1"/><rect x="154.7" y="414.0" width="3.6" height="47.0" fill="#22c27a" stroke="#1b4a2c" stroke-width="1"/><path d="M163.5 410.0V434.0" stroke="#4a1a14" stroke-width="1"/><rect x="161.7" y="414.0" width="3.6" height="6.0" fill="#f2655c" stroke="#4a1a14" stroke-width="1"/><path d="M170.5 380.6V425.0" stroke="#1b4a2c" stroke-width="1"/><rect x="168.7" y="389.4" width="3.6" height="31.6" fill="#22c27a" stroke="#1b4a2c" stroke-width="1"/><path d="M177.5 371.0V397.8" stroke="#1b4a2c" stroke-width="1"/><rect x="175.7" y="373.8" width="3.6" height="14.6" fill="#22c27a" stroke="#1b4a2c" stroke-width="1"/><path d="M184.5 324.0V377.5" stroke="#1b4a2c" stroke-width="1"/><rect x="182.7" y="337.5" width="3.6" height="37.5" fill="#22c27a" stroke="#1b4a2c" stroke-width="1"/><path d="M191.5 324.0V348.0" stroke="#4a1a14" stroke-width="1"/><rect x="189.7" y="336.5" width="3.6" height="1.5" fill="#f2655c" stroke="#4a1a14" stroke-width="1"/><path d="M198.5 333.8V346.0" stroke="#4a1a14" stroke-width="1"/><rect x="196.7" y="337.5" width="3.6" height="5.0" fill="#f2655c" stroke="#4a1a14" stroke-width="1"/><path d="M205.5 318.0V346.0" stroke="#1b4a2c" stroke-width="1"/><rect x="203.7" y="323.8" width="3.6" height="18.8" fill="#22c27a" stroke="#1b4a2c" stroke-width="1"/><path d="M212.5 291.6V363.0" stroke="#4a1a14" stroke-width="1"/><rect x="210.7" y="323.8" width="3.6" height="13.8" fill="#f2655c" stroke="#4a1a14" stroke-width="1"/><path d="M219.5 308.8V343.0" stroke="#1b4a2c" stroke-width="1"/><rect x="217.7" y="316.6" width="3.6" height="20.9" fill="#22c27a" stroke="#1b4a2c" stroke-width="1"/><path d="M226.5 297.8V326.0" stroke="#1b4a2c" stroke-width="1"/><rect x="224.7" y="306.0" width="3.6" height="9.6" fill="#22c27a" stroke="#1b4a2c" stroke-width="1"/><path d="M233.5 301.0V324.0" stroke="#4a1a14" stroke-width="1"/><rect x="231.7" y="305.6" width="3.6" height="14.1" fill="#f2655c" stroke="#4a1a14" stroke-width="1"/><path d="M240.5 319.7V348.8" stroke="#4a1a14" stroke-width="1"/><rect x="238.7" y="322.8" width="3.6" height="22.8" fill="#f2655c" stroke="#4a1a14" stroke-width="1"/><path d="M247.5 327.5V347.8" stroke="#1b4a2c" stroke-width="1"/><rect x="245.7" y="330.6" width="3.6" height="15.0" fill="#22c27a" stroke="#1b4a2c" stroke-width="1"/><path d="M254.5 325.0V343.0" stroke="#4a1a14" stroke-width="1"/><rect x="252.7" y="328.0" width="3.6" height="7.0" fill="#f2655c" stroke="#4a1a14" stroke-width="1"/><path d="M261.5 332.0V344.0" stroke="#4a1a14" stroke-width="1"/><rect x="259.7" y="336.0" width="3.6" height="4.6" fill="#f2655c" stroke="#4a1a14" stroke-width="1"/><path d="M268.5 297.8V342.5" stroke="#1b4a2c" stroke-width="1"/><rect x="266.7" y="301.0" width="3.6" height="38.0" fill="#22c27a" stroke="#1b4a2c" stroke-width="1"/><path d="M275.5 262.5V304.0" stroke="#4a1a14" stroke-width="1"/><rect x="273.7" y="283.8" width="3.6" height="18.8" fill="#f2655c" stroke="#4a1a14" stroke-width="1"/><path d="M281.5 271.0V305.6" stroke="#1b4a2c" stroke-width="1"/><rect x="279.7" y="280.0" width="3.6" height="22.5" fill="#22c27a" stroke="#1b4a2c" stroke-width="1"/><path d="M288.5 274.0V290.0" stroke="#4a1a14" stroke-width="1"/><rect x="286.7" y="281.0" width="3.6" height="4.0" fill="#f2655c" stroke="#4a1a14" stroke-width="1"/><path d="M295.5 274.0V307.0" stroke="#4a1a14" stroke-width="1"/><rect x="293.7" y="284.4" width="3.6" height="16.6" fill="#f2655c" stroke="#4a1a14" stroke-width="1"/><path d="M302.5 297.8V313.4" stroke="#4a1a14" stroke-width="1"/><rect x="300.7" y="301.0" width="3.6" height="10.0" fill="#f2655c" stroke="#4a1a14" stroke-width="1"/><path d="M309.5 294.7V312.5" stroke="#1b4a2c" stroke-width="1"/><rect x="307.7" y="297.0" width="3.6" height="13.0" fill="#22c27a" stroke="#1b4a2c" stroke-width="1"/><path d="M316.5 269.7V307.0" stroke="#1b4a2c" stroke-width="1"/><rect x="314.7" y="275.0" width="3.6" height="22.8" fill="#22c27a" stroke="#1b4a2c" stroke-width="1"/><path d="M323.5 259.0V277.5" stroke="#1b4a2c" stroke-width="1"/><rect x="321.7" y="266.5" width="3.6" height="8.5" fill="#22c27a" stroke="#1b4a2c" stroke-width="1"/><path d="M330.5 265.0V324.0" stroke="#4a1a14" stroke-width="1"/><rect x="328.7" y="266.5" width="3.6" height="45.5" fill="#f2655c" stroke="#4a1a14" stroke-width="1"/><path d="M337.5 301.0V333.8" stroke="#4a1a14" stroke-width="1"/><rect x="335.7" y="312.5" width="3.6" height="16.5" fill="#f2655c" stroke="#4a1a14" stroke-width="1"/><path d="M344.5 318.0V343.0" stroke="#4a1a14" stroke-width="1"/><rect x="342.7" y="329.0" width="3.6" height="11.6" fill="#f2655c" stroke="#4a1a14" stroke-width="1"/><path d="M351.5 337.0V360.0" stroke="#4a1a14" stroke-width="1"/><rect x="349.7" y="339.0" width="3.6" height="19.0" fill="#f2655c" stroke="#4a1a14" stroke-width="1"/><path d="M358.5 341.6V358.0" stroke="#1b4a2c" stroke-width="1"/><rect x="356.7" y="342.5" width="3.6" height="13.5" fill="#22c27a" stroke="#1b4a2c" stroke-width="1"/><path d="M365.5 305.6V352.5" stroke="#1b4a2c" stroke-width="1"/><rect x="363.7" y="340.0" width="3.6" height="2.5" fill="#22c27a" stroke="#1b4a2c" stroke-width="1"/><path d="M372.5 326.0V358.8" stroke="#4a1a14" stroke-width="1"/><rect x="370.7" y="341.6" width="3.6" height="13.1" fill="#f2655c" stroke="#4a1a14" stroke-width="1"/><path d="M379.5 321.2V343.0" stroke="#4a1a14" stroke-width="1"/><rect x="377.7" y="333.8" width="3.6" height="6.2" fill="#f2655c" stroke="#4a1a14" stroke-width="1"/><path d="M386.5 328.0V346.0" stroke="#1b4a2c" stroke-width="1"/><rect x="384.7" y="334.0" width="3.6" height="5.0" fill="#22c27a" stroke="#1b4a2c" stroke-width="1"/><path d="M393.5 322.8V359.0" stroke="#4a1a14" stroke-width="1"/><rect x="391.7" y="337.5" width="3.6" height="9.5" fill="#f2655c" stroke="#4a1a14" stroke-width="1"/><path d="M400.5 333.8V353.0" stroke="#1b4a2c" stroke-width="1"/><rect x="398.7" y="340.6" width="3.6" height="6.4" fill="#22c27a" stroke="#1b4a2c" stroke-width="1"/><path d="M407.5 315.0V341.6" stroke="#1b4a2c" stroke-width="1"/><rect x="405.7" y="315.0" width="3.6" height="25.0" fill="#22c27a" stroke="#1b4a2c" stroke-width="1"/><path d="M414.5 301.0V322.0" stroke="#1b4a2c" stroke-width="1"/><rect x="412.7" y="308.0" width="3.6" height="8.0" fill="#22c27a" stroke="#1b4a2c" stroke-width="1"/><path d="M421.5 288.4V316.6" stroke="#1b4a2c" stroke-width="1"/><rect x="419.7" y="294.0" width="3.6" height="13.0" fill="#22c27a" stroke="#1b4a2c" stroke-width="1"/><path d="M428.5 290.0V337.0" stroke="#4a1a14" stroke-width="1"/><rect x="426.7" y="295.0" width="3.6" height="38.0" fill="#f2655c" stroke="#4a1a14" stroke-width="1"/><path d="M435.5 321.2V335.3" stroke="#4a1a14" stroke-width="1"/><rect x="433.7" y="331.0" width="3.6" height="2.0" fill="#f2655c" stroke="#4a1a14" stroke-width="1"/><path d="M442.5 328.0V357.0" stroke="#4a1a14" stroke-width="1"/><rect x="440.7" y="330.6" width="3.6" height="12.4" fill="#f2655c" stroke="#4a1a14" stroke-width="1"/><path d="M449.5 338.0V387.0" stroke="#4a1a14" stroke-width="1"/><rect x="447.7" y="343.0" width="3.6" height="34.5" fill="#f2655c" stroke="#4a1a14" stroke-width="1"/><path d="M456.5 355.6V394.7" stroke="#1b4a2c" stroke-width="1"/><rect x="454.7" y="368.0" width="3.6" height="9.5" fill="#22c27a" stroke="#1b4a2c" stroke-width="1"/><path d="M463.5 332.0V374.0" stroke="#1b4a2c" stroke-width="1"/><rect x="461.7" y="339.0" width="3.6" height="28.5" fill="#22c27a" stroke="#1b4a2c" stroke-width="1"/><path d="M470.5 313.0V343.0" stroke="#1b4a2c" stroke-width="1"/><rect x="468.7" y="332.0" width="3.6" height="7.0" fill="#22c27a" stroke="#1b4a2c" stroke-width="1"/><path d="M476.5 323.8V342.5" stroke="#4a1a14" stroke-width="1"/><rect x="474.7" y="331.0" width="3.6" height="1.5" fill="#f2655c" stroke="#4a1a14" stroke-width="1"/><path d="M483.5 324.0V351.6" stroke="#4a1a14" stroke-width="1"/><rect x="481.7" y="332.0" width="3.6" height="16.0" fill="#f2655c" stroke="#4a1a14" stroke-width="1"/><path d="M490.5 326.9V355.6" stroke="#1b4a2c" stroke-width="1"/><rect x="488.7" y="331.0" width="3.6" height="17.0" fill="#22c27a" stroke="#1b4a2c" stroke-width="1"/><path d="M497.5 323.8V333.8" stroke="#4a1a14" stroke-width="1"/><rect x="495.7" y="330.6" width="3.6" height="1.5" fill="#f2655c" stroke="#4a1a14" stroke-width="1"/><path d="M504.5 315.0V348.8" stroke="#4a1a14" stroke-width="1"/><rect x="502.7" y="331.0" width="3.6" height="15.0" fill="#f2655c" stroke="#4a1a14" stroke-width="1"/><path d="M511.5 334.0V374.0" stroke="#4a1a14" stroke-width="1"/><rect x="509.7" y="346.0" width="3.6" height="7.0" fill="#f2655c" stroke="#4a1a14" stroke-width="1"/><path d="M518.5 343.0V362.5" stroke="#1b4a2c" stroke-width="1"/><rect x="516.7" y="348.8" width="3.6" height="5.9" fill="#22c27a" stroke="#1b4a2c" stroke-width="1"/><path d="M525.5 341.6V368.0" stroke="#4a1a14" stroke-width="1"/><rect x="523.7" y="348.8" width="3.6" height="16.2" fill="#f2655c" stroke="#4a1a14" stroke-width="1"/><path d="M532.5 351.0V368.8" stroke="#1b4a2c" stroke-width="1"/><rect x="530.7" y="353.0" width="3.6" height="11.0" fill="#22c27a" stroke="#1b4a2c" stroke-width="1"/><path d="M539.5 341.6V361.2" stroke="#1b4a2c" stroke-width="1"/><rect x="537.7" y="350.0" width="3.6" height="2.5" fill="#22c27a" stroke="#1b4a2c" stroke-width="1"/><path d="M546.5 343.0V359.4" stroke="#4a1a14" stroke-width="1"/><rect x="544.7" y="349.0" width="3.6" height="3.5" fill="#f2655c" stroke="#4a1a14" stroke-width="1"/><path d="M553.5 345.6V363.4" stroke="#4a1a14" stroke-width="1"/><rect x="551.7" y="350.0" width="3.6" height="10.0" fill="#f2655c" stroke="#4a1a14" stroke-width="1"/><path d="M560.5 354.0V362.5" stroke="#1b4a2c" stroke-width="1"/><rect x="558.7" y="355.6" width="3.6" height="4.4" fill="#22c27a" stroke="#1b4a2c" stroke-width="1"/><path d="M567.5 344.7V356.2" stroke="#1b4a2c" stroke-width="1"/><rect x="565.7" y="349.0" width="3.6" height="6.6" fill="#22c27a" stroke="#1b4a2c" stroke-width="1"/><path d="M574.5 330.6V355.0" stroke="#1b4a2c" stroke-width="1"/><rect x="572.7" y="334.0" width="3.6" height="15.0" fill="#22c27a" stroke="#1b4a2c" stroke-width="1"/><path d="M581.5 314.0V337.5" stroke="#4a1a14" stroke-width="1"/><rect x="579.7" y="331.0" width="3.6" height="2.0" fill="#f2655c" stroke="#4a1a14" stroke-width="1"/><path d="M588.5 327.0V352.5" stroke="#4a1a14" stroke-width="1"/><rect x="586.7" y="333.0" width="3.6" height="16.0" fill="#f2655c" stroke="#4a1a14" stroke-width="1"/><path d="M595.5 345.6V360.3" stroke="#4a1a14" stroke-width="1"/><rect x="593.7" y="349.0" width="3.6" height="7.0" fill="#f2655c" stroke="#4a1a14" stroke-width="1"/><path d="M602.5 343.0V364.4" stroke="#1b4a2c" stroke-width="1"/><rect x="600.7" y="345.6" width="3.6" height="10.4" fill="#22c27a" stroke="#1b4a2c" stroke-width="1"/><path d="M609.5 318.0V346.9" stroke="#1b4a2c" stroke-width="1"/><rect x="607.7" y="320.6" width="3.6" height="23.1" fill="#22c27a" stroke="#1b4a2c" stroke-width="1"/><path d="M616.5 317.5V333.8" stroke="#1b4a2c" stroke-width="1"/><rect x="614.7" y="319.7" width="3.6" height="1.5" fill="#22c27a" stroke="#1b4a2c" stroke-width="1"/><path d="M623.5 317.5V331.2" stroke="#4a1a14" stroke-width="1"/><rect x="621.7" y="319.7" width="3.6" height="5.3" fill="#f2655c" stroke="#4a1a14" stroke-width="1"/><path d="M630.5 323.0V366.6" stroke="#4a1a14" stroke-width="1"/><rect x="628.7" y="325.0" width="3.6" height="36.0" fill="#f2655c" stroke="#4a1a14" stroke-width="1"/><path d="M637.5 346.2V362.5" stroke="#1b4a2c" stroke-width="1"/><rect x="635.7" y="352.5" width="3.6" height="8.5" fill="#22c27a" stroke="#1b4a2c" stroke-width="1"/><path d="M644.5 349.0V390.0" stroke="#4a1a14" stroke-width="1"/><rect x="642.7" y="352.5" width="3.6" height="30.5" fill="#f2655c" stroke="#4a1a14" stroke-width="1"/><path d="M651.5 375.0V398.0" stroke="#4a1a14" stroke-width="1"/><rect x="649.7" y="383.8" width="3.6" height="12.2" fill="#f2655c" stroke="#4a1a14" stroke-width="1"/><path d="M658.5 385.0V408.8" stroke="#4a1a14" stroke-width="1"/><rect x="656.7" y="395.6" width="3.6" height="3.4" fill="#f2655c" stroke="#4a1a14" stroke-width="1"/><path d="M665.5 391.6V413.0" stroke="#1b4a2c" stroke-width="1"/><rect x="663.7" y="397.8" width="3.6" height="2.2" fill="#22c27a" stroke="#1b4a2c" stroke-width="1"/><path d="M672.5 384.4V399.4" stroke="#1b4a2c" stroke-width="1"/><rect x="670.7" y="389.0" width="3.6" height="8.8" fill="#22c27a" stroke="#1b4a2c" stroke-width="1"/><path d="M678.5 374.4V392.5" stroke="#1b4a2c" stroke-width="1"/><rect x="676.7" y="378.0" width="3.6" height="11.0" fill="#22c27a" stroke="#1b4a2c" stroke-width="1"/><path d="M685.5 376.9V390.0" stroke="#4a1a14" stroke-width="1"/><rect x="683.7" y="378.0" width="3.6" height="6.4" fill="#f2655c" stroke="#4a1a14" stroke-width="1"/><path d="M692.5 371.0V398.0" stroke="#1b4a2c" stroke-width="1"/><rect x="690.7" y="380.0" width="3.6" height="3.0" fill="#22c27a" stroke="#1b4a2c" stroke-width="1"/><path d="M699.5 370.6V386.9" stroke="#1b4a2c" stroke-width="1"/><rect x="697.7" y="377.0" width="3.6" height="2.0" fill="#22c27a" stroke="#1b4a2c" stroke-width="1"/><path d="M706.5 368.0V385.3" stroke="#4a1a14" stroke-width="1"/><rect x="704.7" y="377.0" width="3.6" height="1.5" fill="#f2655c" stroke="#4a1a14" stroke-width="1"/><path d="M713.5 374.4V390.0" stroke="#4a1a14" stroke-width="1"/><rect x="711.7" y="378.0" width="3.6" height="10.0" fill="#f2655c" stroke="#4a1a14" stroke-width="1"/><path d="M720.5 376.0V393.0" stroke="#4a1a14" stroke-width="1"/><rect x="718.7" y="388.0" width="3.6" height="3.6" fill="#f2655c" stroke="#4a1a14" stroke-width="1"/><path d="M727.5 390.0V405.0" stroke="#4a1a14" stroke-width="1"/><rect x="725.7" y="393.6" width="3.6" height="8.8" fill="#f2655c" stroke="#4a1a14" stroke-width="1"/><path d="M734.5 391.0V406.0" stroke="#1b4a2c" stroke-width="1"/><rect x="732.7" y="401.0" width="3.6" height="1.5" fill="#22c27a" stroke="#1b4a2c" stroke-width="1"/><path d="M741.5 391.0V403.0" stroke="#4a1a14" stroke-width="1"/><rect x="739.7" y="393.4" width="3.6" height="6.0" fill="#f2655c" stroke="#4a1a14" stroke-width="1"/><path d="M748.5 395.6V401.2" stroke="#4a1a14" stroke-width="1"/><rect x="746.7" y="398.0" width="3.6" height="1.5" fill="#f2655c" stroke="#4a1a14" stroke-width="1"/><path d="M755.5 383.0V402.5" stroke="#1b4a2c" stroke-width="1"/><rect x="753.7" y="385.6" width="3.6" height="13.8" fill="#22c27a" stroke="#1b4a2c" stroke-width="1"/><path d="M762.5 386.0V401.2" stroke="#1b4a2c" stroke-width="1"/><rect x="760.7" y="390.0" width="3.6" height="1.5" fill="#22c27a" stroke="#1b4a2c" stroke-width="1"/><path d="M769.5 364.0V394.0" stroke="#1b4a2c" stroke-width="1"/><rect x="767.7" y="371.5" width="3.6" height="19.1" fill="#22c27a" stroke="#1b4a2c" stroke-width="1"/><path d="M776.5 361.2V377.0" stroke="#4a1a14" stroke-width="1"/><rect x="774.7" y="371.6" width="3.6" height="1.5" fill="#f2655c" stroke="#4a1a14" stroke-width="1"/><path d="M783.5 365.0V376.2" stroke="#1b4a2c" stroke-width="1"/><rect x="781.7" y="372.0" width="3.6" height="1.5" fill="#22c27a" stroke="#1b4a2c" stroke-width="1"/><path d="M790.5 367.5V395.0" stroke="#4a1a14" stroke-width="1"/><rect x="788.7" y="372.0" width="3.6" height="22.0" fill="#f2655c" stroke="#4a1a14" stroke-width="1"/><path d="M797.5 386.2V395.6" stroke="#1b4a2c" stroke-width="1"/><rect x="795.7" y="392.0" width="3.6" height="2.0" fill="#22c27a" stroke="#1b4a2c" stroke-width="1"/><path d="M804.5 381.6V394.0" stroke="#1b4a2c" stroke-width="1"/><rect x="802.7" y="388.8" width="3.6" height="3.8" fill="#22c27a" stroke="#1b4a2c" stroke-width="1"/><path d="M811.5 367.5V391.0" stroke="#1b4a2c" stroke-width="1"/><rect x="809.7" y="374.0" width="3.6" height="14.8" fill="#22c27a" stroke="#1b4a2c" stroke-width="1"/><path d="M818.5 356.6V391.0" stroke="#4a1a14" stroke-width="1"/><rect x="816.7" y="374.0" width="3.6" height="14.0" fill="#f2655c" stroke="#4a1a14" stroke-width="1"/><path d="M825.5 369.0V389.4" stroke="#1b4a2c" stroke-width="1"/><rect x="823.7" y="372.0" width="3.6" height="16.0" fill="#22c27a" stroke="#1b4a2c" stroke-width="1"/><path d="M832.5 366.0V375.3" stroke="#1b4a2c" stroke-width="1"/><rect x="830.7" y="372.0" width="3.6" height="2.0" fill="#22c27a" stroke="#1b4a2c" stroke-width="1"/><path d="M839.5 365.0V376.2" stroke="#1b4a2c" stroke-width="1"/><rect x="837.7" y="372.0" width="3.6" height="1.5" fill="#22c27a" stroke="#1b4a2c" stroke-width="1"/><path d="M846.5 364.4V378.4" stroke="#1b4a2c" stroke-width="1"/><rect x="844.7" y="372.0" width="3.6" height="1.5" fill="#22c27a" stroke="#1b4a2c" stroke-width="1"/><path d="M853.5 364.4V375.3" stroke="#1b4a2c" stroke-width="1"/><rect x="851.7" y="367.5" width="3.6" height="5.5" fill="#22c27a" stroke="#1b4a2c" stroke-width="1"/><path d="M860.5 366.0V371.0" stroke="#4a1a14" stroke-width="1"/><rect x="858.7" y="367.5" width="3.6" height="1.5" fill="#f2655c" stroke="#4a1a14" stroke-width="1"/><path d="M867.5 356.6V370.0" stroke="#1b4a2c" stroke-width="1"/><rect x="865.7" y="358.8" width="3.6" height="9.2" fill="#22c27a" stroke="#1b4a2c" stroke-width="1"/><path d="M874.5 337.8V359.7" stroke="#1b4a2c" stroke-width="1"/><rect x="872.7" y="339.0" width="3.6" height="19.8" fill="#22c27a" stroke="#1b4a2c" stroke-width="1"/><path d="M880.5 337.8V341.0" stroke="#4a1a14" stroke-width="1"/><rect x="878.7" y="339.0" width="3.6" height="1.5" fill="#f2655c" stroke="#4a1a14" stroke-width="1"/><path d="M887.5 320.6V341.0" stroke="#1b4a2c" stroke-width="1"/><rect x="885.7" y="323.0" width="3.6" height="16.0" fill="#22c27a" stroke="#1b4a2c" stroke-width="1"/><path d="M894.5 317.5V327.5" stroke="#4a1a14" stroke-width="1"/><rect x="892.7" y="322.5" width="3.6" height="1.5" fill="#f2655c" stroke="#4a1a14" stroke-width="1"/><path d="M901.5 316.0V323.8" stroke="#1b4a2c" stroke-width="1"/><rect x="899.7" y="318.0" width="3.6" height="2.6" fill="#22c27a" stroke="#1b4a2c" stroke-width="1"/><path d="M908.5 303.4V320.0" stroke="#1b4a2c" stroke-width="1"/><rect x="906.7" y="315.0" width="3.6" height="3.0" fill="#22c27a" stroke="#1b4a2c" stroke-width="1"/><path d="M915.5 309.7V316.9" stroke="#1b4a2c" stroke-width="1"/><rect x="913.7" y="312.8" width="3.6" height="2.2" fill="#22c27a" stroke="#1b4a2c" stroke-width="1"/><path d="M922.5 295.6V314.4" stroke="#1b4a2c" stroke-width="1"/><rect x="920.7" y="299.0" width="3.6" height="14.8" fill="#22c27a" stroke="#1b4a2c" stroke-width="1"/><path d="M929.5 264.4V299.4" stroke="#1b4a2c" stroke-width="1"/><rect x="927.7" y="267.5" width="3.6" height="31.0" fill="#22c27a" stroke="#1b4a2c" stroke-width="1"/><path d="M936.5 228.0V253.8" stroke="#4a1a14" stroke-width="1"/><rect x="934.7" y="243.0" width="3.6" height="7.0" fill="#f2655c" stroke="#4a1a14" stroke-width="1"/><path d="M943.5 202.8V261.0" stroke="#1b4a2c" stroke-width="1"/><rect x="941.7" y="207.4" width="3.6" height="42.6" fill="#22c27a" stroke="#1b4a2c" stroke-width="1"/><path d="M950.5 185.5V259.3" stroke="#4a1a14" stroke-width="1"/><rect x="948.7" y="207.4" width="3.6" height="51.9" fill="#f2655c" stroke="#4a1a14" stroke-width="1"/><path d="M957.5 254.0V282.0" stroke="#4a1a14" stroke-width="1"/><rect x="955.7" y="258.4" width="3.6" height="7.6" fill="#f2655c" stroke="#4a1a14" stroke-width="1"/><path d="M964.5 252.0V272.0" stroke="#1b4a2c" stroke-width="1"/><rect x="962.7" y="253.5" width="3.6" height="12.5" fill="#22c27a" stroke="#1b4a2c" stroke-width="1"/><path d="M971.5 256.0V276.6" stroke="#4a1a14" stroke-width="1"/><rect x="969.7" y="256.0" width="3.6" height="20.6" fill="#f2655c" stroke="#4a1a14" stroke-width="1"/><path d="M978.5 269.0V288.5" stroke="#1b4a2c" stroke-width="1"/><rect x="976.7" y="270.0" width="3.6" height="6.6" fill="#22c27a" stroke="#1b4a2c" stroke-width="1"/><path d="M985.5 258.4V273.0" stroke="#1b4a2c" stroke-width="1"/><rect x="983.7" y="261.0" width="3.6" height="8.0" fill="#22c27a" stroke="#1b4a2c" stroke-width="1"/><path d="M992.5 258.4V271.0" stroke="#4a1a14" stroke-width="1"/><rect x="990.7" y="261.0" width="3.6" height="5.6" fill="#f2655c" stroke="#4a1a14" stroke-width="1"/><path d="M999.5 253.8V269.3" stroke="#1b4a2c" stroke-width="1"/><rect x="997.7" y="260.0" width="3.6" height="6.6" fill="#22c27a" stroke="#1b4a2c" stroke-width="1"/><path d="M1006.5 249.3V261.0" stroke="#1b4a2c" stroke-width="1"/><rect x="1004.7" y="254.0" width="3.6" height="6.0" fill="#22c27a" stroke="#1b4a2c" stroke-width="1"/><path d="M1013.5 244.7V274.0" stroke="#4a1a14" stroke-width="1"/><rect x="1011.7" y="254.0" width="3.6" height="6.0" fill="#f2655c" stroke="#4a1a14" stroke-width="1"/><path d="M1020.5 250.0V268.4" stroke="#1b4a2c" stroke-width="1"/><rect x="1018.7" y="254.0" width="3.6" height="6.0" fill="#22c27a" stroke="#1b4a2c" stroke-width="1"/><path d="M1027.5 244.7V266.6" stroke="#4a1a14" stroke-width="1"/><rect x="1025.7" y="254.0" width="3.6" height="1.5" fill="#f2655c" stroke="#4a1a14" stroke-width="1"/><path d="M1034.5 238.3V260.0" stroke="#1b4a2c" stroke-width="1"/><rect x="1032.7" y="240.0" width="3.6" height="14.0" fill="#22c27a" stroke="#1b4a2c" stroke-width="1"/><path d="M1041.5 219.0V234.0" stroke="#4a1a14" stroke-width="1"/><rect x="1039.7" y="224.0" width="3.6" height="2.5" fill="#f2655c" stroke="#4a1a14" stroke-width="1"/><path d="M1048.5 224.7V247.5" stroke="#4a1a14" stroke-width="1"/><rect x="1046.7" y="226.0" width="3.6" height="18.4" fill="#f2655c" stroke="#4a1a14" stroke-width="1"/><path d="M1055.5 232.0V244.7" stroke="#1b4a2c" stroke-width="1"/><rect x="1053.7" y="232.0" width="3.6" height="12.4" fill="#22c27a" stroke="#1b4a2c" stroke-width="1"/><path d="M1062.5 220.0V240.0" stroke="#4a1a14" stroke-width="1"/><rect x="1060.7" y="232.0" width="3.6" height="3.0" fill="#f2655c" stroke="#4a1a14" stroke-width="1"/><path d="M1069.5 213.4V240.6" stroke="#1b4a2c" stroke-width="1"/><rect x="1067.7" y="216.5" width="3.6" height="18.5" fill="#22c27a" stroke="#1b4a2c" stroke-width="1"/><polyline points="57.0,393.8 66.4,386.0 73.2,386.0 79.5,368.8 86.7,315.6 97.6,343.8 107.0,356.0 114.8,343.8 121.0,357.8 128.2,363.0 134.5,353.0 142.0,339.0 149.2,407.8 156.4,368.8 163.2,357.8 169.5,311.0 176.0,293.0 185.3,280.6 196.2,275.0 199.4,276.0 211.9,324.4 218.0,319.7 226.0,358.8 232.2,365.0 240.6,365.0 246.9,311.9 258.8,315.0 268.0,276.0 281.2,271.2 295.6,305.6 302.5,296.2 310.3,296.2 324.4,324.4 338.4,390.0 352.5,419.7 359.7,424.4 372.2,472.8 380.0,462.5 386.2,458.0 393.0,456.6 406.6,393.0 421.2,356.2 428.4,360.3 449.4,424.4 463.8,391.6 470.6,397.8 476.9,374.4 491.0,346.2 504.4,324.4 511.2,351.0 518.0,333.8 525.3,365.0 532.5,351.0 539.4,340.0 545.6,341.6 559.0,359.4 574.7,309.4 581.9,305.6 595.6,336.2 609.7,266.6 623.0,305.6 631.0,343.0 637.2,339.4 645.0,397.8 651.2,405.0 658.0,394.7 665.3,394.7 671.6,369.7 678.8,356.2 685.6,369.7 692.5,356.2 699.7,360.3 706.6,355.6 713.8,377.5 720.2,383.6 727.2,412.5 734.0,394.7 748.0,394.0 755.3,370.6 762.5,378.4 776.2,286.2 783.4,279.4 790.6,314.4 797.5,325.3 804.4,310.6 811.6,279.4 818.8,295.0 825.6,280.6 832.5,302.0 839.7,306.6 846.9,286.2 853.8,282.5 860.6,294.0 873.2,213.5 880.5,213.5 887.3,207.5 894.4,218.4 901.4,210.4 908.1,213.5 915.2,213.5 921.7,215.3 929.5,221.6 936.2,218.4 943.0,221.6 950.0,263.0 957.4,275.7 964.3,267.9 971.4,295.7 985.2,266.2 992.5,279.3 999.3,273.0 1006.2,272.0 1013.3,243.8 1020.2,246.2 1027.5,259.0 1034.4,235.6 1041.2,244.7 1048.5,286.6 1055.2,266.6 1062.5,233.8 1068.5,238.3" fill="none" stroke="#2222ee" stroke-width="1.15" stroke-linejoin="round"/><circle cx="734.5" cy="394.3" r="5.6" fill="#fff" fill-opacity="0.85" stroke="#b0b0b0" stroke-width="1.6"/><path d="M734.5 391.3v5.5" stroke="#aaa" stroke-width="1"/><text x="611" y="306" font-size="21" fill="#2222ee" font-family="Liberation Sans">A</text><text x="903" y="252" font-size="20" fill="#2222ee" font-family="Liberation Sans">D</text><text x="966" y="415.5" font-size="20.5" fill="#1a1aee" font-family="Liberation Serif" textLength="62" lengthAdjust="spacingAndGlyphs">修正期</text><text x="71" y="478.6" font-size="19.5" font-weight="bold" fill="#111" stroke="#111" stroke-width="0.9" textLength="88" lengthAdjust="spacingAndGlyphs">Investing</text><text x="161" y="478.6" font-size="14.5" fill="#444" textLength="29" lengthAdjust="spacingAndGlyphs">.com</text><circle cx="133.5" cy="464.5" r="1.6" fill="#f5a623"/></g><g clip-path="url(#cr)"><rect x="58" y="531.5" width="1230" height="54" fill="#f2e6f4"/><rect x="936.5" y="503.5" width="159.5" height="88" fill="#ffff00" fill-opacity="0.5" stroke="#4a6a6a" stroke-width="1"/><path d="M58 531.5H1288M58 585.5H1288" stroke="#777" stroke-width="1" stroke-dasharray="5 4"/><polyline points="59.4,541.9 66.7,543.3 73.2,547.7 79.9,538.9 86.6,533.7 93.7,545.4 100.4,545.4 107.7,549.5 115.0,546.5 121.8,552.4 128.2,550.6 135.5,547.7 142.3,545.4 149.3,555.6 156.0,542.4 163.3,545.4 170.7,537.5 177.4,535.4 184.7,528.7 191.2,528.7 198.5,530.7 205.8,527.2 212.5,533.1 219.6,529.6 226.3,528.7 233.6,533.7 240.4,544.2 247.7,540.4 254.7,543.3 261.4,545.4 268.2,536.6 274.6,536.6 281.4,531.6 288.4,533.1 295.1,540.4 302.4,545.4 309.2,541.9 316.5,536.6 322.9,534.5 330.3,552.1 337.6,557.1 344.9,560.9 351.3,565.3 358.7,560.3 365.4,559.4 372.7,564.4 379.2,560.0 385.9,557.4 393.2,561.5 400.5,559.4 407.9,551.5 414.6,549.5 421.0,544.8 428.4,559.4 435.7,558.5 443.0,562.9 449.7,571.1 450.0,571.7 456.4,568.2 463.2,559.4 469.9,556.5 476.4,556.5 483.7,562.3 490.4,556.5 497.4,556.5 504.2,561.2 511.5,564.4 518.2,562.3 525.5,568.2 532.6,563.8 539.3,561.8 546.6,562.9 553.4,565.6 560.7,563.5 567.1,560.9 574.5,553.6 581.2,552.4 588.2,560.6 595.5,564.4 602.3,558.5 609.6,548.6 616.3,547.7 623.6,551.5 630.7,566.2 637.4,562.9 644.1,573.2 651.5,577.6 658.5,578.5 665.8,577.3 672.5,572.0 679.0,567.3 685.7,569.7 692.5,566.7 699.8,565.6 706.2,566.7 713.5,570.5 720.0,571.7 727.6,576.1 734.0,570.5 741.4,573.5 748.1,573.5 755.4,563.8 762.4,566.2 769.2,555.6 776.5,556.5 783.2,555.6 790.3,567.3 797.6,567.3 804.3,564.4 811.6,555.9 818.4,562.3 825.4,554.7 832.1,555.6 839.5,555.3 845.0,555.0 852.3,552.4 859.6,553.6 873.4,537.8 880.1,537.8 888.3,530.7 894.8,530.7 901.5,528.7 908.8,527.2 915.3,526.3 922.6,521.4 929.3,514.0 935.8,512.0 943.1,506.7 950.4,534.5 957.7,539.5 965.1,536.6 971.5,546.5 978.2,544.8 986.1,542.4 992.9,544.8 999.6,542.4 1006.6,540.4 1013.4,544.8 1020.7,541.0 1028.0,542.4 1034.8,537.8 1041.8,533.1 1048.5,543.3 1055.8,539.5 1063.2,541.9 1069.0,535.4" fill="none" stroke="#b863c8" stroke-width="1.1"/><path d="M735.5 496V591" stroke="#999" stroke-width="1" stroke-dasharray="4 4"/><text x="959" y="588.5" font-size="20.5" fill="#1a1aee" font-family="Liberation Serif" textLength="125" lengthAdjust="spacingAndGlyphs">指標渾沌不清</text></g><g clip-path="url(#cc)"><rect x="936.5" y="605.5" width="159.5" height="74" fill="#ffff00" fill-opacity="0.5" stroke="#4a6a6a" stroke-width="1"/><path d="M60.5 657.3V664.7M67.5 657.3V664.7M74.5 657.3V665.5M81.5 657.3V661.7M87.5 657.3V657.9M95.5 657.3V657.9M102.5 657.3V659.1M109.5 657.3V661.4M116.5 657.3V661.4M123.5 657.3V662.6M130.5 657.3V663.2M137.5 657.3V663.2M144.5 657.3V663.2M151.5 657.3V663.8M157.5 657.3V661.2M164.5 657.3V659.1M172.5 657.3V655.0M179.5 657.3V650.9M185.5 657.3V645.6M193.5 657.3V643.3M200.5 657.3V642.1M207.5 657.3V642.1M214.5 657.3V644.2M221.5 657.3V645.1M228.5 657.3V646.2M235.5 657.3V649.2M242.5 657.3V655.0M248.5 657.3V656.8M256.5 657.3V661.2M263.5 657.3V663.8M270.5 657.3V661.7M277.5 657.3V661.7M283.5 657.3V659.4M297.5 657.3V658.2M303.5 657.3V660.3M311.5 657.3V660.9M318.5 657.3V659.1M324.5 657.3V657.9M332.5 657.3V662.0M338.5 657.3V667.0M345.5 657.3V671.4M353.5 657.3V674.3M360.5 657.3V674.9M366.5 657.3V674.9M373.5 657.3V675.8M381.5 657.3V671.4M387.5 657.3V669.6M395.5 657.3V666.7M402.5 657.3V665.5M409.5 657.3V661.7M416.5 657.3V658.5M422.5 657.3V655.9M430.5 657.3V656.2M436.5 657.3V658.2M444.5 657.3V660.3M450.5 657.3V663.8M457.5 657.3V665.5M465.5 657.3V663.2M471.5 657.3V661.7M478.5 657.3V659.7M485.5 657.3V657.9M492.5 657.3V657.9M498.5 657.3V657.3M505.5 657.3V659.1M512.5 657.3V659.1M519.5 657.3V657.9M526.5 657.3V660.3M533.5 657.3V660.3M540.5 657.3V660.3M547.5 657.3V660.3M554.5 657.3V659.1M561.5 657.3V657.9M569.5 657.3V657.9M576.5 657.3V656.8M582.5 657.3V654.4M590.5 657.3V655.0M596.5 657.3V656.8M604.5 657.3V656.8M611.5 657.3V653.0M617.5 657.3V652.1M624.5 657.3V653.8M631.5 657.3V656.8M639.5 657.3V656.8M646.5 657.3V659.1M652.5 657.3V663.2M659.5 657.3V665.0M666.5 657.3V668.5M673.5 657.3V667.6M680.5 657.3V665.5M687.5 657.3V661.7M694.5 657.3V659.1M701.5 657.3V657.9M714.5 657.3V656.8M721.5 657.3V656.8M728.5 657.3V657.9M735.5 657.3V657.9M742.5 657.3V657.9M749.5 657.3V657.3M764.5 657.3V656.8M771.5 657.3V653.8M777.5 657.3V652.1M784.5 657.3V650.9M791.5 657.3V653.3M798.5 657.3V653.8M806.5 657.3V653.8M813.5 657.3V654.4M820.5 657.3V655.0M827.5 657.3V654.4M834.5 657.3V653.8M841.5 657.3V653.3M848.5 657.3V653.8M855.5 657.3V656.8M862.5 657.3V656.8M868.5 657.3V655.9M875.5 657.3V653.8M882.5 657.3V656.8M889.5 657.3V652.1M896.5 657.3V649.2M903.5 657.3V648.0M909.5 657.3V648.6M917.5 657.3V648.0M923.5 657.3V648.6M931.5 657.3V645.6M937.5 657.3V643.3M945.5 657.3V639.8M951.5 657.3V641.2M959.5 657.3V645.6M965.5 657.3V648.0M972.5 657.3V653.0M979.5 657.3V656.8M986.5 657.3V658.8M994.5 657.3V660.9M1000.5 657.3V662.6M1008.5 657.3V661.7M1015.5 657.3V662.6M1022.5 657.3V661.2M1029.5 657.3V661.2M1035.5 657.3V659.7M1043.5 657.3V657.9M1050.5 657.3V658.2M1056.5 657.3V657.9M1064.5 657.3V657.9" stroke="#f04848" stroke-width="1"/><polyline points="59.4,612.0 78.4,617.8 98.9,620.7 116.5,622.8 142.8,626.6 166.3,631.0 178.0,630.4 195.6,625.1 213.1,616.9 230.7,608.2 245.3,605.2 260.0,605.2 277.5,607.6 298.0,609.9 318.5,611.1 339.0,614.0 359.5,622.2 377.1,631.6 400.5,644.2 415.2,648.6 432.7,649.4 444.5,651.5 461.7,652.1 476.4,655.0 493.9,657.9 508.6,659.4 523.2,660.3 537.8,660.9 552.5,661.2 567.1,661.7 581.8,661.7 602.3,661.7 616.9,659.4 631.6,657.3 643.3,657.9 655.0,660.3 672.5,663.2 684.3,666.7 698.9,670.5 719.4,672.0 735.5,672.6 757.5,672.0 772.1,670.5 789.7,668.5 805.8,667.0 824.8,663.2 839.5,661.4 862.6,659.1 880.1,655.9 897.7,650.0 915.3,645.1 932.8,637.4 950.4,629.5 965.1,623.7 982.6,618.1 991.4,616.9 1000.2,617.2 1017.8,619.9 1026.6,622.2 1038.3,623.7 1050.0,625.1 1067.5,625.1" fill="none" stroke="#f26060" stroke-width="1.1"/><polyline points="59.4,619.9 74.0,623.7 79.9,622.8 87.2,619.9 98.9,622.8 107.7,625.7 116.5,627.5 126.7,631.0 135.5,631.6 142.8,633.0 150.2,634.5 157.5,632.5 164.8,631.9 176.5,625.1 185.3,616.9 192.6,612.8 201.4,607.6 208.7,605.2 219.0,603.2 226.3,601.7 233.6,601.7 242.4,604.6 254.1,609.9 261.4,612.5 271.7,611.1 281.9,609.6 292.2,609.0 301.0,611.1 309.8,614.0 321.5,612.3 328.8,614.9 340.5,624.6 350.8,634.5 359.5,640.4 374.2,648.0 385.9,650.6 400.5,653.5 412.2,649.2 421.0,646.2 432.7,649.2 441.5,651.5 450.3,659.1 457.3,660.9 464.6,660.3 472.0,658.8 485.1,659.4 498.3,657.9 511.5,659.4 524.7,662.3 539.3,662.3 552.5,663.2 567.1,663.2 580.3,657.9 589.1,659.7 602.3,659.7 616.9,653.0 624.2,652.1 631.6,655.9 638.9,657.3 649.1,664.7 665.2,672.9 684.3,673.5 698.9,670.5 713.5,670.5 725.3,672.0 735.5,672.6 748.7,672.6 763.3,670.5 772.1,666.7 783.8,663.2 798.5,664.1 805.8,663.2 813.1,661.7 824.8,660.3 830.7,659.1 859.6,655.0 874.3,650.0 891.9,642.7 903.6,638.3 921.1,633.3 929.9,627.5 937.2,621.6 943.1,614.9 950.4,613.4 957.7,614.6 963.6,613.4 970.9,616.9 982.6,620.2 994.3,622.8 1009.0,624.6 1026.6,626.6 1035.3,626.3 1042.7,624.6 1050.0,626.3 1067.5,625.7" fill="none" stroke="#5555ee" stroke-width="1.1"/><path d="M735.5 592V681" stroke="#999" stroke-width="1" stroke-dasharray="4 4"/></g><rect x="1288" y="208.5" width="51" height="16.5" fill="#4d7de6"/><text x="1314.5" y="221.1" font-size="12" fill="#fff" font-weight="bold" text-anchor="middle" textLength="39" lengthAdjust="spacingAndGlyphs">1589.01</text><rect x="1288" y="231" width="33" height="16" fill="#0000e6"/><text x="1305.5" y="243.3" font-size="12" fill="#fff" font-weight="bold" text-anchor="middle" textLength="21" lengthAdjust="spacingAndGlyphs">6.40</text><rect x="1288" y="268.5" width="51" height="15.0" fill="#555"/><text x="1314.5" y="280.3" font-size="12" fill="#fff" font-weight="bold" text-anchor="middle" textLength="39" lengthAdjust="spacingAndGlyphs">1546.00</text><text x="1296" y="529.3" font-size="12" fill="#555" textLength="39" lengthAdjust="spacingAndGlyphs">75.0000</text><text x="1296" y="563.3" font-size="12" fill="#555" textLength="39" lengthAdjust="spacingAndGlyphs">50.0000</text><path d="M1288 525h5M1288 559h5" stroke="#555"/><rect x="1288" y="528.5" width="51" height="14.5" fill="#800080"/><text x="1314.5" y="540.0" font-size="12" fill="#fff" font-weight="bold" text-anchor="middle" textLength="39" lengthAdjust="spacingAndGlyphs">67.3908</text><rect x="1288" y="603" width="51" height="14" fill="#0000ee"/><text x="1314.5" y="614.3" font-size="12" fill="#fff" font-weight="bold" text-anchor="middle" textLength="39" lengthAdjust="spacingAndGlyphs">16.9865</text><rect x="1288" y="617.5" width="51" height="15.5" fill="#ee0000"/><text x="1314.5" y="629.5" font-size="12" fill="#fff" font-weight="bold" text-anchor="middle" textLength="39" lengthAdjust="spacingAndGlyphs">16.8514</text><rect x="1288" y="649" width="45" height="15.5" fill="#ee0000"/><text x="1311.5" y="661.0" font-size="12" fill="#fff" font-weight="bold" text-anchor="middle" textLength="33" lengthAdjust="spacingAndGlyphs">0.1351</text><g transform="translate(1,0.5)"><rect x="1250" y="177" width="13.5" height="13.5" fill="#ddd"/><rect x="1267" y="177" width="13.5" height="13.5" fill="#ddd"/><path d="M1256.5 179.5v8M1253.5 184.5l3 3 3-3M1273.5 179v10M1271 181.5l2.5-2.5 2.5 2.5M1271 186.5l2.5 2.5 2.5-2.5" stroke="#fff" stroke-width="1.6" fill="none"/></g><path d="M157.5 681V685" stroke="#555"/><text x="157" y="695.5" font-size="12" fill="#555" text-anchor="middle">Aug</text><path d="M234.5 681V685" stroke="#555"/><text x="234" y="695.5" font-size="12" fill="#555" text-anchor="middle">16</text><path d="M457.5 681V685" stroke="#555"/><text x="457" y="695.5" font-size="12" fill="#555" text-anchor="middle">Oct</text><path d="M534.0 681V685" stroke="#555"/><text x="533.5" y="695.5" font-size="12" fill="#555" text-anchor="middle">16</text><path d="M840.5 681V685" stroke="#555"/><text x="840" y="695.5" font-size="12" fill="#555" text-anchor="middle">17</text><path d="M993.5 681V685" stroke="#555"/><text x="993" y="695.5" font-size="12" fill="#555" text-anchor="middle">16</text><path d="M1216.5 681V685" stroke="#555"/><text x="1216" y="695.5" font-size="12" fill="#555" text-anchor="middle">Mar</text><text x="316" y="695.5" font-size="12" fill="#555">p</text><text x="622" y="695.5" font-size="12" fill="#555">v</text><text x="900" y="695.5" font-size="12" fill="#555" font-weight="bold">20</text><rect x="58" y="681.5" width="64" height="18.5" fill="#00e000"/><text x="90" y="695.5" font-size="12" fill="#111" text-anchor="middle" textLength="58" lengthAdjust="spacingAndGlyphs">2019-06-24</text><rect x="251.0" y="681.5" width="64" height="18.5" fill="#ee0000"/><text x="283.0" y="695.5" font-size="12" fill="#fff" font-weight="bold" text-anchor="middle" textLength="56" lengthAdjust="spacingAndGlyphs">2019-08-27</text><path d="M283.0 681.5v3" stroke="#fff" stroke-width="1"/><rect x="321.0" y="681.5" width="64" height="18.5" fill="#ee0000"/><text x="353.0" y="695.5" font-size="12" fill="#fff" font-weight="bold" text-anchor="middle" textLength="56" lengthAdjust="spacingAndGlyphs">2019-09-10</text><path d="M353.0 681.5v3" stroke="#fff" stroke-width="1"/><rect x="550.5" y="681.5" width="64" height="18.5" fill="#ee0000"/><text x="582.5" y="695.5" font-size="12" fill="#fff" font-weight="bold" text-anchor="middle" textLength="56" lengthAdjust="spacingAndGlyphs">2019-10-28</text><path d="M582.5 681.5v3" stroke="#fff" stroke-width="1"/><rect x="557.5" y="681.5" width="64" height="18.5" fill="#ee0000"/><text x="589.5" y="695.5" font-size="12" fill="#fff" font-weight="bold" text-anchor="middle" textLength="56" lengthAdjust="spacingAndGlyphs">2019-10-28</text><path d="M589.5 681.5v3" stroke="#fff" stroke-width="1"/><rect x="696.5" y="681.5" width="64" height="18.5" fill="#ee0000"/><text x="728.5" y="695.5" font-size="12" fill="#fff" font-weight="bold" text-anchor="middle" textLength="56" lengthAdjust="spacingAndGlyphs">2019-11-25</text><path d="M728.5 681.5v3" stroke="#fff" stroke-width="1"/><rect x="759.5" y="681.5" width="64" height="18.5" fill="#ee0000"/><text x="791.5" y="695.5" font-size="12" fill="#fff" font-weight="bold" text-anchor="middle" textLength="56" lengthAdjust="spacingAndGlyphs">2019-12-05</text><path d="M791.5 681.5v3" stroke="#fff" stroke-width="1"/><rect x="752.5" y="681.5" width="64" height="18.5" fill="#0000ee"/><text x="784.5" y="695.5" font-size="12" fill="#fff" font-weight="bold" text-anchor="middle" textLength="56" lengthAdjust="spacingAndGlyphs">2019-12-05</text><path d="M784.5 681.5v3" stroke="#fff" stroke-width="1"/><rect x="703.5" y="681.5" width="64" height="18.5" fill="#555"/><text x="735.5" y="695.5" font-size="12" fill="#fff" font-weight="bold" text-anchor="middle" textLength="56" lengthAdjust="spacingAndGlyphs">2019-11-26</text><path d="M735.5 681.5v3" stroke="#fff" stroke-width="1"/><rect x="919.5" y="681.5" width="64" height="18.5" fill="#ee0000"/><text x="951.5" y="695.5" font-size="12" fill="#fff" font-weight="bold" text-anchor="middle" textLength="56" lengthAdjust="spacingAndGlyphs">2020-01-08</text><path d="M951.5 681.5v3" stroke="#fff" stroke-width="1"/><rect x="912.5" y="681.5" width="64" height="18.5" fill="#0000ee"/><text x="944.5" y="695.5" font-size="12" fill="#fff" font-weight="bold" text-anchor="middle" textLength="56" lengthAdjust="spacingAndGlyphs">2020-01-07</text><path d="M944.5 681.5v3" stroke="#fff" stroke-width="1"/><rect x="1017.5" y="681.5" width="64" height="18.5" fill="#ee0000"/><text x="1049.5" y="695.5" font-size="12" fill="#fff" font-weight="bold" text-anchor="middle" textLength="56" lengthAdjust="spacingAndGlyphs">2020-01-28</text><path d="M1049.5 681.5v3" stroke="#fff" stroke-width="1"/><rect x="1037.5" y="681.5" width="64" height="18.5" fill="#ee0000"/><text x="1069.5" y="695.5" font-size="12" fill="#fff" font-weight="bold" text-anchor="middle" textLength="56" lengthAdjust="spacingAndGlyphs">2020-01-31</text><path d="M1069.5 681.5v3" stroke="#fff" stroke-width="1"/><rect x="1024.5" y="681.5" width="64" height="18.5" fill="#0000ee"/><text x="1056.5" y="695.5" font-size="12" fill="#fff" font-weight="bold" text-anchor="middle" textLength="56" lengthAdjust="spacingAndGlyphs">2020-01-29</text><path d="M1056.5 681.5v3" stroke="#fff" stroke-width="1"/><text x="81" y="716" font-size="12" fill="#9a9a9a" font-weight="bold" text-anchor="middle">10y</text><text x="122" y="716" font-size="12" fill="#9a9a9a" font-weight="bold" text-anchor="middle">3y</text><text x="161" y="716" font-size="12" fill="#9a9a9a" font-weight="bold" text-anchor="middle">1y</text><text x="201" y="716" font-size="12" fill="#9a9a9a" font-weight="bold" text-anchor="middle">1m</text><text x="241" y="716" font-size="12" fill="#9a9a9a" font-weight="bold" text-anchor="middle">7d</text><text x="280" y="716" font-size="12" fill="#9a9a9a" font-weight="bold" text-anchor="middle">1d</text><path d="M102.5 705V718" stroke="#c5c7cc"/><path d="M140.5 705V718" stroke="#c5c7cc"/><path d="M178.5 705V718" stroke="#c5c7cc"/><path d="M220.5 705V718" stroke="#c5c7cc"/><path d="M259.5 705V718" stroke="#c5c7cc"/><path d="M298.5 705V718" stroke="#c5c7cc"/><path d="M1179.5 705V718" stroke="#c5c7cc"/><path d="M1212.5 705V718" stroke="#c5c7cc"/><path d="M1257.5 705V718" stroke="#c5c7cc"/><path d="M1300.5 705V718" stroke="#c5c7cc"/><text x="312" y="716" font-size="12" fill="#9a9a9a" font-weight="bold">Go to...</text><text x="1078" y="716" font-size="12" fill="#999" font-weight="bold">22:55:11 <tspan font-weight="normal">(UTC-5)</tspan></text><text x="1196" y="716" font-size="12" fill="#999" font-weight="bold" text-anchor="middle">%</text><text x="1234" y="716" font-size="12" fill="#999" font-weight="bold" text-anchor="middle">log</text><text x="1278" y="716" font-size="12" fill="#5ab4e6" font-weight="bold" text-anchor="middle">auto</text><g transform="translate(1322,711)"><circle r="4.5" fill="none" stroke="#888" stroke-width="2"/><rect x="-1" y="-7" width="2" height="3" fill="#888" transform="rotate(0)"/><rect x="-1" y="-7" width="2" height="3" fill="#888" transform="rotate(45)"/><rect x="-1" y="-7" width="2" height="3" fill="#888" transform="rotate(90)"/><rect x="-1" y="-7" width="2" height="3" fill="#888" transform="rotate(135)"/><rect x="-1" y="-7" width="2" height="3" fill="#888" transform="rotate(180)"/><rect x="-1" y="-7" width="2" height="3" fill="#888" transform="rotate(225)"/><rect x="-1" y="-7" width="2" height="3" fill="#888" transform="rotate(270)"/><rect x="-1" y="-7" width="2" height="3" fill="#888" transform="rotate(315)"/></g></svg>
<div class="a" style="left:63px;top:163px;width:13px;height:12px;border:1px solid #555"></div><div class="a" style="left:66px;top:168.5px;width:7px;height:1px;background:#555"></div>
<div class="a" style="left:82px;top:160px;font-size:15.5px;color:#444;letter-spacing:0.25px;white-space:nowrap">XAU/USD, D,</div>
<svg class="a" style="left:183px;top:167px" width="8" height="5"><path d="M0 0h8L4 4z" fill="#bbb"/></svg>
<div class="a" style="left:201px;top:162px;width:14px;height:14px;background:#d9d9d9"></div>
<svg class="a" style="left:201px;top:162px" width="14" height="14"><path d="M2.3 7Q7 -0.2 11.7 7Q7 14.2 2.3 7z" fill="none" stroke="#fff" stroke-width="1.6"/><circle cx="7" cy="7" r="1.9" fill="none" stroke="#fff" stroke-width="1.5"/></svg>
<div class="a" style="left:218px;top:162px;width:14px;height:14px;background:#d9d9d9"></div>
<svg class="a" style="left:218px;top:162px" width="14" height="14"><g transform="translate(7,7)"><circle r="3.8" fill="#fff"/><rect x="-1.1" y="-5.2" width="2.2" height="2" fill="#fff" transform="rotate(0)"/><rect x="-1.1" y="-5.2" width="2.2" height="2" fill="#fff" transform="rotate(45)"/><rect x="-1.1" y="-5.2" width="2.2" height="2" fill="#fff" transform="rotate(90)"/><rect x="-1.1" y="-5.2" width="2.2" height="2" fill="#fff" transform="rotate(135)"/><rect x="-1.1" y="-5.2" width="2.2" height="2" fill="#fff" transform="rotate(180)"/><rect x="-1.1" y="-5.2" width="2.2" height="2" fill="#fff" transform="rotate(225)"/><rect x="-1.1" y="-5.2" width="2.2" height="2" fill="#fff" transform="rotate(270)"/><rect x="-1.1" y="-5.2" width="2.2" height="2" fill="#fff" transform="rotate(315)"/><circle r="1.6" fill="#d9d9d9"/></g></svg>
<div class="a" style="left:240px;top:161px;font-size:14.5px;color:#444;white-space:nowrap;letter-spacing:0.2px">O<span style="color:#2e6b3f">1453.96</span>&nbsp;&nbsp;H<span style="color:#2e6b3f">1462.94</span>&nbsp;&nbsp;L<span style="color:#2e6b3f">1450.18</span>&nbsp;&nbsp;C<span style="color:#2e6b3f">1460.66</span></div>
<svg class="a" style="left:114px;top:187px" width="8" height="5"><path d="M0 0h8L4 4z" fill="#ccc"/></svg>
<div class="a" style="left:132px;top:183px;width:14px;height:14px;background:#3aa9e0"></div>
<svg class="a" style="left:132px;top:183px" width="14" height="14"><path d="M2.3 7Q7 -0.2 11.7 7Q7 14.2 2.3 7z" fill="none" stroke="#fff" stroke-width="1.6"/><circle cx="7" cy="7" r="1.9" fill="none" stroke="#fff" stroke-width="1.5"/></svg>
<div class="a" style="left:149px;top:183px;width:14px;height:14px;background:#d9d9d9"></div>
<svg class="a" style="left:149px;top:183px" width="14" height="14"><g transform="translate(7,7)"><circle r="3.8" fill="#fff"/><rect x="-1.1" y="-5.2" width="2.2" height="2" fill="#fff" transform="rotate(0)"/><rect x="-1.1" y="-5.2" width="2.2" height="2" fill="#fff" transform="rotate(45)"/><rect x="-1.1" y="-5.2" width="2.2" height="2" fill="#fff" transform="rotate(90)"/><rect x="-1.1" y="-5.2" width="2.2" height="2" fill="#fff" transform="rotate(135)"/><rect x="-1.1" y="-5.2" width="2.2" height="2" fill="#fff" transform="rotate(180)"/><rect x="-1.1" y="-5.2" width="2.2" height="2" fill="#fff" transform="rotate(225)"/><rect x="-1.1" y="-5.2" width="2.2" height="2" fill="#fff" transform="rotate(270)"/><rect x="-1.1" y="-5.2" width="2.2" height="2" fill="#fff" transform="rotate(315)"/><circle r="1.6" fill="#d9d9d9"/></g></svg>
<div class="a" style="left:166px;top:183px;width:14px;height:14px;background:#d9d9d9"></div>
<svg class="a" style="left:166px;top:183px" width="14" height="14"><path d="M3 3l8 8M11 3l-8 8" stroke="#fff" stroke-width="1.4"/></svg>
<svg class="a" style="left:122px;top:207px" width="8" height="5"><path d="M0 0h8L4 4z" fill="#ccc"/></svg>
<div class="a" style="left:140px;top:203px;width:14px;height:14px;background:#3aa9e0"></div>
<svg class="a" style="left:140px;top:203px" width="14" height="14"><path d="M2.3 7Q7 -0.2 11.7 7Q7 14.2 2.3 7z" fill="none" stroke="#fff" stroke-width="1.6"/><circle cx="7" cy="7" r="1.9" fill="none" stroke="#fff" stroke-width="1.5"/></svg>
<div class="a" style="left:157px;top:203px;width:14px;height:14px;background:#d9d9d9"></div>
<svg class="a" style="left:157px;top:203px" width="14" height="14"><g transform="translate(7,7)"><circle r="3.8" fill="#fff"/><rect x="-1.1" y="-5.2" width="2.2" height="2" fill="#fff" transform="rotate(0)"/><rect x="-1.1" y="-5.2" width="2.2" height="2" fill="#fff" transform="rotate(45)"/><rect x="-1.1" y="-5.2" width="2.2" height="2" fill="#fff" transform="rotate(90)"/><rect x="-1.1" y="-5.2" width="2.2" height="2" fill="#fff" transform="rotate(135)"/><rect x="-1.1" y="-5.2" width="2.2" height="2" fill="#fff" transform="rotate(180)"/><rect x="-1.1" y="-5.2" width="2.2" height="2" fill="#fff" transform="rotate(225)"/><rect x="-1.1" y="-5.2" width="2.2" height="2" fill="#fff" transform="rotate(270)"/><rect x="-1.1" y="-5.2" width="2.2" height="2" fill="#fff" transform="rotate(315)"/><circle r="1.6" fill="#d9d9d9"/></g></svg>
<div class="a" style="left:174px;top:203px;width:14px;height:14px;background:#d9d9d9"></div>
<svg class="a" style="left:174px;top:203px" width="14" height="14"><path d="M3 3l8 8M11 3l-8 8" stroke="#fff" stroke-width="1.4"/></svg>
<svg class="a" style="left:146px;top:227px" width="8" height="5"><path d="M0 0h8L4 4z" fill="#ccc"/></svg>
<div class="a" style="left:164px;top:223px;width:14px;height:14px;background:#3aa9e0"></div>
<svg class="a" style="left:164px;top:223px" width="14" height="14"><path d="M2.3 7Q7 -0.2 11.7 7Q7 14.2 2.3 7z" fill="none" stroke="#fff" stroke-width="1.6"/><circle cx="7" cy="7" r="1.9" fill="none" stroke="#fff" stroke-width="1.5"/></svg>
<div class="a" style="left:181px;top:223px;width:14px;height:14px;background:#d9d9d9"></div>
<svg class="a" style="left:181px;top:223px" width="14" height="14"><g transform="translate(7,7)"><circle r="3.8" fill="#fff"/><rect x="-1.1" y="-5.2" width="2.2" height="2" fill="#fff" transform="rotate(0)"/><rect x="-1.1" y="-5.2" width="2.2" height="2" fill="#fff" transform="rotate(45)"/><rect x="-1.1" y="-5.2" width="2.2" height="2" fill="#fff" transform="rotate(90)"/><rect x="-1.1" y="-5.2" width="2.2" height="2" fill="#fff" transform="rotate(135)"/><rect x="-1.1" y="-5.2" width="2.2" height="2" fill="#fff" transform="rotate(180)"/><rect x="-1.1" y="-5.2" width="2.2" height="2" fill="#fff" transform="rotate(225)"/><rect x="-1.1" y="-5.2" width="2.2" height="2" fill="#fff" transform="rotate(270)"/><rect x="-1.1" y="-5.2" width="2.2" height="2" fill="#fff" transform="rotate(315)"/><circle r="1.6" fill="#d9d9d9"/></g></svg>
<div class="a" style="left:198px;top:223px;width:14px;height:14px;background:#d9d9d9"></div>
<svg class="a" style="left:198px;top:223px" width="14" height="14"><path d="M3 3l8 8M11 3l-8 8" stroke="#fff" stroke-width="1.4"/></svg>
<svg class="a" style="left:190px;top:248px" width="8" height="5"><path d="M0 0h8L4 4z" fill="#ccc"/></svg>
<div class="a" style="left:208px;top:244px;width:14px;height:14px;background:#3aa9e0"></div>
<svg class="a" style="left:208px;top:244px" width="14" height="14"><path d="M2.3 7Q7 -0.2 11.7 7Q7 14.2 2.3 7z" fill="none" stroke="#fff" stroke-width="1.6"/><circle cx="7" cy="7" r="1.9" fill="none" stroke="#fff" stroke-width="1.5"/></svg>
<div class="a" style="left:225px;top:244px;width:14px;height:14px;background:#d9d9d9"></div>
<svg class="a" style="left:225px;top:244px" width="14" height="14"><g transform="translate(7,7)"><circle r="3.8" fill="#fff"/><rect x="-1.1" y="-5.2" width="2.2" height="2" fill="#fff" transform="rotate(0)"/><rect x="-1.1" y="-5.2" width="2.2" height="2" fill="#fff" transform="rotate(45)"/><rect x="-1.1" y="-5.2" width="2.2" height="2" fill="#fff" transform="rotate(90)"/><rect x="-1.1" y="-5.2" width="2.2" height="2" fill="#fff" transform="rotate(135)"/><rect x="-1.1" y="-5.2" width="2.2" height="2" fill="#fff" transform="rotate(180)"/><rect x="-1.1" y="-5.2" width="2.2" height="2" fill="#fff" transform="rotate(225)"/><rect x="-1.1" y="-5.2" width="2.2" height="2" fill="#fff" transform="rotate(270)"/><rect x="-1.1" y="-5.2" width="2.2" height="2" fill="#fff" transform="rotate(315)"/><circle r="1.6" fill="#d9d9d9"/></g></svg>
<div class="a" style="left:242px;top:244px;width:14px;height:14px;background:#d9d9d9"></div>
<svg class="a" style="left:242px;top:244px" width="14" height="14"><path d="M3 3l8 8M11 3l-8 8" stroke="#fff" stroke-width="1.4"/></svg>
<svg class="a" style="left:122px;top:268px" width="8" height="5"><path d="M0 0h8L4 4z" fill="#ccc"/></svg>
<div class="a" style="left:140px;top:264px;width:14px;height:14px;background:#3aa9e0"></div>
<svg class="a" style="left:140px;top:264px" width="14" height="14"><path d="M2.3 7Q7 -0.2 11.7 7Q7 14.2 2.3 7z" fill="none" stroke="#fff" stroke-width="1.6"/><circle cx="7" cy="7" r="1.9" fill="none" stroke="#fff" stroke-width="1.5"/></svg>
<div class="a" style="left:157px;top:264px;width:14px;height:14px;background:#d9d9d9"></div>
<svg class="a" style="left:157px;top:264px" width="14" height="14"><g transform="translate(7,7)"><circle r="3.8" fill="#fff"/><rect x="-1.1" y="-5.2" width="2.2" height="2" fill="#fff" transform="rotate(0)"/><rect x="-1.1" y="-5.2" width="2.2" height="2" fill="#fff" transform="rotate(45)"/><rect x="-1.1" y="-5.2" width="2.2" height="2" fill="#fff" transform="rotate(90)"/><rect x="-1.1" y="-5.2" width="2.2" height="2" fill="#fff" transform="rotate(135)"/><rect x="-1.1" y="-5.2" width="2.2" height="2" fill="#fff" transform="rotate(180)"/><rect x="-1.1" y="-5.2" width="2.2" height="2" fill="#fff" transform="rotate(225)"/><rect x="-1.1" y="-5.2" width="2.2" height="2" fill="#fff" transform="rotate(270)"/><rect x="-1.1" y="-5.2" width="2.2" height="2" fill="#fff" transform="rotate(315)"/><circle r="1.6" fill="#d9d9d9"/></g></svg>
<div class="a" style="left:174px;top:264px;width:14px;height:14px;background:#d9d9d9"></div>
<svg class="a" style="left:174px;top:264px" width="14" height="14"><path d="M3 3l8 8M11 3l-8 8" stroke="#fff" stroke-width="1.4"/></svg>
<svg class="a" style="left:149px;top:288px" width="8" height="5"><path d="M0 0h8L4 4z" fill="#ccc"/></svg>
<div class="a" style="left:167px;top:284px;width:14px;height:14px;background:#3aa9e0"></div>
<svg class="a" style="left:167px;top:284px" width="14" height="14"><path d="M2.3 7Q7 -0.2 11.7 7Q7 14.2 2.3 7z" fill="none" stroke="#fff" stroke-width="1.6"/><circle cx="7" cy="7" r="1.9" fill="none" stroke="#fff" stroke-width="1.5"/></svg>
<div class="a" style="left:184px;top:284px;width:14px;height:14px;background:#d9d9d9"></div>
<svg class="a" style="left:184px;top:284px" width="14" height="14"><g transform="translate(7,7)"><circle r="3.8" fill="#fff"/><rect x="-1.1" y="-5.2" width="2.2" height="2" fill="#fff" transform="rotate(0)"/><rect x="-1.1" y="-5.2" width="2.2" height="2" fill="#fff" transform="rotate(45)"/><rect x="-1.1" y="-5.2" width="2.2" height="2" fill="#fff" transform="rotate(90)"/><rect x="-1.1" y="-5.2" width="2.2" height="2" fill="#fff" transform="rotate(135)"/><rect x="-1.1" y="-5.2" width="2.2" height="2" fill="#fff" transform="rotate(180)"/><rect x="-1.1" y="-5.2" width="2.2" height="2" fill="#fff" transform="rotate(225)"/><rect x="-1.1" y="-5.2" width="2.2" height="2" fill="#fff" transform="rotate(270)"/><rect x="-1.1" y="-5.2" width="2.2" height="2" fill="#fff" transform="rotate(315)"/><circle r="1.6" fill="#d9d9d9"/></g></svg>
<div class="a" style="left:201px;top:284px;width:14px;height:14px;background:#d9d9d9"></div>
<svg class="a" style="left:201px;top:284px" width="14" height="14"><path d="M3 3l8 8M11 3l-8 8" stroke="#fff" stroke-width="1.4"/></svg>
<svg class="a" style="left:119px;top:308px" width="8" height="5"><path d="M0 0h8L4 4z" fill="#ccc"/></svg>
<div class="a" style="left:137px;top:304px;width:14px;height:14px;background:#d9d9d9"></div>
<svg class="a" style="left:137px;top:304px" width="14" height="14"><path d="M2.3 7Q7 -0.2 11.7 7Q7 14.2 2.3 7z" fill="none" stroke="#fff" stroke-width="1.6"/><circle cx="7" cy="7" r="1.9" fill="none" stroke="#fff" stroke-width="1.5"/></svg>
<div class="a" style="left:154px;top:304px;width:14px;height:14px;background:#d9d9d9"></div>
<svg class="a" style="left:154px;top:304px" width="14" height="14"><g transform="translate(7,7)"><circle r="3.8" fill="#fff"/><rect x="-1.1" y="-5.2" width="2.2" height="2" fill="#fff" transform="rotate(0)"/><rect x="-1.1" y="-5.2" width="2.2" height="2" fill="#fff" transform="rotate(45)"/><rect x="-1.1" y="-5.2" width="2.2" height="2" fill="#fff" transform="rotate(90)"/><rect x="-1.1" y="-5.2" width="2.2" height="2" fill="#fff" transform="rotate(135)"/><rect x="-1.1" y="-5.2" width="2.2" height="2" fill="#fff" transform="rotate(180)"/><rect x="-1.1" y="-5.2" width="2.2" height="2" fill="#fff" transform="rotate(225)"/><rect x="-1.1" y="-5.2" width="2.2" height="2" fill="#fff" transform="rotate(270)"/><rect x="-1.1" y="-5.2" width="2.2" height="2" fill="#fff" transform="rotate(315)"/><circle r="1.6" fill="#d9d9d9"/></g></svg>
<div class="a" style="left:171px;top:304px;width:14px;height:14px;background:#d9d9d9"></div>
<svg class="a" style="left:171px;top:304px" width="14" height="14"><path d="M3 3l8 8M11 3l-8 8" stroke="#fff" stroke-width="1.4"/></svg>
<svg class="a" style="left:123px;top:328px" width="8" height="5"><path d="M0 0h8L4 4z" fill="#ccc"/></svg>
<div class="a" style="left:141px;top:324px;width:14px;height:14px;background:#3aa9e0"></div>
<svg class="a" style="left:141px;top:324px" width="14" height="14"><path d="M2.3 7Q7 -0.2 11.7 7Q7 14.2 2.3 7z" fill="none" stroke="#fff" stroke-width="1.6"/><circle cx="7" cy="7" r="1.9" fill="none" stroke="#fff" stroke-width="1.5"/></svg>
<div class="a" style="left:158px;top:324px;width:14px;height:14px;background:#d9d9d9"></div>
<svg class="a" style="left:158px;top:324px" width="14" height="14"><g transform="translate(7,7)"><circle r="3.8" fill="#fff"/><rect x="-1.1" y="-5.2" width="2.2" height="2" fill="#fff" transform="rotate(0)"/><rect x="-1.1" y="-5.2" width="2.2" height="2" fill="#fff" transform="rotate(45)"/><rect x="-1.1" y="-5.2" width="2.2" height="2" fill="#fff" transform="rotate(90)"/><rect x="-1.1" y="-5.2" width="2.2" height="2" fill="#fff" transform="rotate(135)"/><rect x="-1.1" y="-5.2" width="2.2" height="2" fill="#fff" transform="rotate(180)"/><rect x="-1.1" y="-5.2" width="2.2" height="2" fill="#fff" transform="rotate(225)"/><rect x="-1.1" y="-5.2" width="2.2" height="2" fill="#fff" transform="rotate(270)"/><rect x="-1.1" y="-5.2" width="2.2" height="2" fill="#fff" transform="rotate(315)"/><circle r="1.6" fill="#d9d9d9"/></g></svg>
<div class="a" style="left:175px;top:324px;width:14px;height:14px;background:#d9d9d9"></div>
<svg class="a" style="left:175px;top:324px" width="14" height="14"><path d="M3 3l8 8M11 3l-8 8" stroke="#fff" stroke-width="1.4"/></svg>
<svg class="a" style="left:114.5px;top:349px" width="8" height="5"><path d="M0 0h8L4 4z" fill="#ccc"/></svg>
<div class="a" style="left:132.5px;top:345px;width:14px;height:14px;background:#3aa9e0"></div>
<svg class="a" style="left:132.5px;top:345px" width="14" height="14"><path d="M2.3 7Q7 -0.2 11.7 7Q7 14.2 2.3 7z" fill="none" stroke="#fff" stroke-width="1.6"/><circle cx="7" cy="7" r="1.9" fill="none" stroke="#fff" stroke-width="1.5"/></svg>
<div class="a" style="left:149.5px;top:345px;width:14px;height:14px;background:#d9d9d9"></div>
<svg class="a" style="left:149.5px;top:345px" width="14" height="14"><g transform="translate(7,7)"><circle r="3.8" fill="#fff"/><rect x="-1.1" y="-5.2" width="2.2" height="2" fill="#fff" transform="rotate(0)"/><rect x="-1.1" y="-5.2" width="2.2" height="2" fill="#fff" transform="rotate(45)"/><rect x="-1.1" y="-5.2" width="2.2" height="2" fill="#fff" transform="rotate(90)"/><rect x="-1.1" y="-5.2" width="2.2" height="2" fill="#fff" transform="rotate(135)"/><rect x="-1.1" y="-5.2" width="2.2" height="2" fill="#fff" transform="rotate(180)"/><rect x="-1.1" y="-5.2" width="2.2" height="2" fill="#fff" transform="rotate(225)"/><rect x="-1.1" y="-5.2" width="2.2" height="2" fill="#fff" transform="rotate(270)"/><rect x="-1.1" y="-5.2" width="2.2" height="2" fill="#fff" transform="rotate(315)"/><circle r="1.6" fill="#d9d9d9"/></g></svg>
<div class="a" style="left:166.5px;top:345px;width:14px;height:14px;background:#d9d9d9"></div>
<svg class="a" style="left:166.5px;top:345px" width="14" height="14"><path d="M3 3l8 8M11 3l-8 8" stroke="#fff" stroke-width="1.4"/></svg>
<div class="a" style="left:63px;top:503px;font-size:12.5px;color:#444;white-space:nowrap;transform:scaleX(0.86);transform-origin:0 0">RSI (14)</div>
<svg class="a" style="left:108px;top:509px" width="8" height="5"><path d="M0 0h8L4 4z" fill="#bbb"/></svg>
<div class="a" style="left:126px;top:503px;width:14px;height:14px;background:#d9d9d9"></div>
<svg class="a" style="left:126px;top:503px" width="14" height="14"><path d="M2.3 7Q7 -0.2 11.7 7Q7 14.2 2.3 7z" fill="none" stroke="#fff" stroke-width="1.6"/><circle cx="7" cy="7" r="1.9" fill="none" stroke="#fff" stroke-width="1.5"/></svg>
<div class="a" style="left:143px;top:503px;width:14px;height:14px;background:#d9d9d9"></div>
<svg class="a" style="left:143px;top:503px" width="14" height="14"><g transform="translate(7,7)"><circle r="3.8" fill="#fff"/><rect x="-1.1" y="-5.2" width="2.2" height="2" fill="#fff" transform="rotate(0)"/><rect x="-1.1" y="-5.2" width="2.2" height="2" fill="#fff" transform="rotate(45)"/><rect x="-1.1" y="-5.2" width="2.2" height="2" fill="#fff" transform="rotate(90)"/><rect x="-1.1" y="-5.2" width="2.2" height="2" fill="#fff" transform="rotate(135)"/><rect x="-1.1" y="-5.2" width="2.2" height="2" fill="#fff" transform="rotate(180)"/><rect x="-1.1" y="-5.2" width="2.2" height="2" fill="#fff" transform="rotate(225)"/><rect x="-1.1" y="-5.2" width="2.2" height="2" fill="#fff" transform="rotate(270)"/><rect x="-1.1" y="-5.2" width="2.2" height="2" fill="#fff" transform="rotate(315)"/><circle r="1.6" fill="#d9d9d9"/></g></svg>
<div class="a" style="left:160px;top:503px;width:14px;height:14px;background:#d9d9d9"></div>
<svg class="a" style="left:160px;top:503px" width="14" height="14"><path d="M3 3l8 8M11 3l-8 8" stroke="#fff" stroke-width="1.4"/></svg>
<div class="a" style="left:182px;top:503px;font-size:12.5px;color:#8b1f9f;white-space:nowrap">41.2137</div>
<div class="a" style="left:63px;top:599px;font-size:12.5px;color:#444;white-space:nowrap;transform:scaleX(0.94);transform-origin:0 0">MACD (12, 26, close, 9)</div>
<svg class="a" style="left:192px;top:605px" width="8" height="5"><path d="M0 0h8L4 4z" fill="#bbb"/></svg>
<div class="a" style="left:210px;top:600px;width:14px;height:14px;background:#d9d9d9"></div>
<svg class="a" style="left:210px;top:600px" width="14" height="14"><path d="M2.3 7Q7 -0.2 11.7 7Q7 14.2 2.3 7z" fill="none" stroke="#fff" stroke-width="1.6"/><circle cx="7" cy="7" r="1.9" fill="none" stroke="#fff" stroke-width="1.5"/></svg>
<div class="a" style="left:227px;top:600px;width:14px;height:14px;background:#d9d9d9"></div>
<svg class="a" style="left:227px;top:600px" width="14" height="14"><g transform="translate(7,7)"><circle r="3.8" fill="#fff"/><rect x="-1.1" y="-5.2" width="2.2" height="2" fill="#fff" transform="rotate(0)"/><rect x="-1.1" y="-5.2" width="2.2" height="2" fill="#fff" transform="rotate(45)"/><rect x="-1.1" y="-5.2" width="2.2" height="2" fill="#fff" transform="rotate(90)"/><rect x="-1.1" y="-5.2" width="2.2" height="2" fill="#fff" transform="rotate(135)"/><rect x="-1.1" y="-5.2" width="2.2" height="2" fill="#fff" transform="rotate(180)"/><rect x="-1.1" y="-5.2" width="2.2" height="2" fill="#fff" transform="rotate(225)"/><rect x="-1.1" y="-5.2" width="2.2" height="2" fill="#fff" transform="rotate(270)"/><rect x="-1.1" y="-5.2" width="2.2" height="2" fill="#fff" transform="rotate(315)"/><circle r="1.6" fill="#d9d9d9"/></g></svg>
<div class="a" style="left:244px;top:600px;width:14px;height:14px;background:#d9d9d9"></div>
<svg class="a" style="left:244px;top:600px" width="14" height="14"><path d="M3 3l8 8M11 3l-8 8" stroke="#fff" stroke-width="1.4"/></svg>
<div class="a" style="left:266px;top:599px;font-size:12.5px;color:#ee0000;white-space:nowrap">-0.2712</div><div class="a" style="left:317.5px;top:599px;font-size:12.5px;color:#1111dd;white-space:nowrap">-8.5426</div><div class="a" style="left:367.5px;top:599px;font-size:12.5px;color:#ee0000;white-space:nowrap">-8.2715</div>
<div class="a" style="left:0;top:728px;width:1366px;height:40px;background:#7b4f47"></div>
<div class="a" style="left:0;top:728px;width:1366px;height:8px;background:#b48880;border-top:1px solid #9a6e66"></div>
<div class="a" style="left:17px;top:729px;width:58px;height:38px;background:rgba(255,255,255,0.14);border:1px solid rgba(255,255,255,0.3)"></div>
<div class="a" style="left:141px;top:729px;width:58px;height:38px;background:rgba(255,255,255,0.14);border:1px solid rgba(255,255,255,0.3)"></div>
<div class="a" style="left:203px;top:729px;width:58px;height:38px;background:rgba(255,255,255,0.14);border:1px solid rgba(255,255,255,0.3)"></div>
<div class="a" style="left:265px;top:729px;width:51px;height:38px;background:rgba(255,255,255,0.14);border:1px solid rgba(255,255,255,0.3)"></div>
<div class="a" style="left:317px;top:729px;width:3px;height:38px;border:1px solid rgba(255,255,255,0.3)"></div>
<svg class="a" style="left:0;top:728px" width="340" height="40" viewBox="0 0 340 40"><path d="M31 11h8l2 2h14v18H31z" fill="#e8c25a"/><path d="M30 16h26v17H30z" fill="#f7dc82"/><rect x="35" y="24" width="16" height="11" fill="#4fb2e8"/><rect x="38" y="27" width="10" height="8" fill="#cde9f7"/><rect x="33" y="10" width="3" height="2" fill="#2a9a2a"/><rect x="40" y="11" width="3" height="2" fill="#d23"/><rect x="48" y="13" width="3" height="2" fill="#29c"/><circle cx="108" cy="21" r="15" fill="#2a5ac8"/><circle cx="104" cy="16" r="7" fill="#6ab0f0" opacity="0.6"/><text x="108" y="30" font-size="20" font-weight="bold" fill="#ff2a1a" text-anchor="middle" font-family="Liberation Serif">南</text><circle cx="170" cy="20.5" r="15.5" fill="#15c39a"/><path d="M177 13.5a9 9 0 1 0 1.5 10h-6" stroke="#fff" stroke-width="3" fill="none"/><path d="M174 22l4.5 4.5" stroke="#fff" stroke-width="2.5"/><circle cx="232" cy="21" r="15.5" fill="#1f7fd0"/><path d="M218 24c5 2 11 3 16-3 2 3 6 4 10 3-4 1-8 3-12 6-4-2-9-3-14-6z M226 16c3 1 6 0 8-3 1 2 3 2 5 2-2 1-4 2-6 4-3-1-5-2-7-3z" fill="#fff"/><circle cx="290" cy="21" r="15" fill="#db4437"/><path d="M290 21L277 13.5A15 15 0 0 1 303 13.5z" fill="#db4437"/><path d="M277 13.5A15 15 0 0 0 290 36L297.5 23.5z" fill="#0f9d58"/><path d="M303 13.5A15 15 0 0 1 290 36L297 21z" fill="#ffcd40"/><path d="M290 13.5h13A15 15 0 0 0 277 13.5z" fill="#db4437"/><circle cx="290" cy="21" r="7" fill="#fff"/><circle cx="290" cy="21" r="5.5" fill="#4285f4"/></svg>
<svg class="a" style="left:1150px;top:728px" width="140" height="40" viewBox="0 0 140 40"><path d="M14.3 23.6L18.4 18.6 22.5 23.6z" fill="#f4f4f8"/><path d="M35.3 19h3.6v5h-1v4.5h-1.6V24h-1z" fill="#fff"/><path d="M36.1 14.5v4.5M38.1 14.5v4.5" stroke="#fff" stroke-width="1.1"/><rect x="42" y="14.8" width="8.8" height="13.5" fill="#4d3b37" stroke="#d8d8d8" stroke-width="1.1"/><rect x="44.4" y="13.2" width="4" height="1.6" fill="#d8d8d8"/><path d="M43 20.5l7 7.5M50 20.5l-7 7.5" stroke="#e81a1a" stroke-width="1.8"/><path d="M59.5 18.8h3.2l5.2-4.6v15.6l-5.2-4.6h-3.2z" fill="#f2f2f2"/><path d="M70.2 19.3a4 4 0 0 1 0 5.8M72.9 16.8a7.5 7.5 0 0 1 0 10.8" stroke="#eee" stroke-width="1.4" fill="none"/><path d="M84 14v14.5" stroke="#fff" stroke-width="1.8"/><path d="M85 14.5h6.5l1.5 2.5h5v5.5h-5l-1.5-1.5H85z" fill="#f0f0f0"/><circle cx="94.1" cy="24.1" r="4.5" fill="#e52222" stroke="#fff" stroke-width="0.8"/><path d="M92.3 22.3l3.6 3.6M95.9 22.3l-3.6 3.6" stroke="#fff" stroke-width="1.3"/><rect x="108.8" y="14.8" width="3.4" height="4.5" fill="none" stroke="#fff" stroke-width="1.3"/><path d="M110.5 19.3v9.2" stroke="#fff" stroke-width="1.5"/><path d="M113.2 16h8.8v7.5h-8.8" stroke="#fff" stroke-width="1.3" fill="none"/><path d="M117.6 23.5v3.2M114.3 27.3h7" stroke="#fff" stroke-width="1.3"/></svg>
<div class="a" style="left:1280px;top:732px;width:70px;font-size:12.3px;color:#fff;text-align:center;line-height:17.5px">11:55 AM<br>2/2/2020</div>
<div class="a" style="left:1360px;top:760px;width:6px;height:8px;background:#fff;opacity:0.9"></div>
</body></html>
